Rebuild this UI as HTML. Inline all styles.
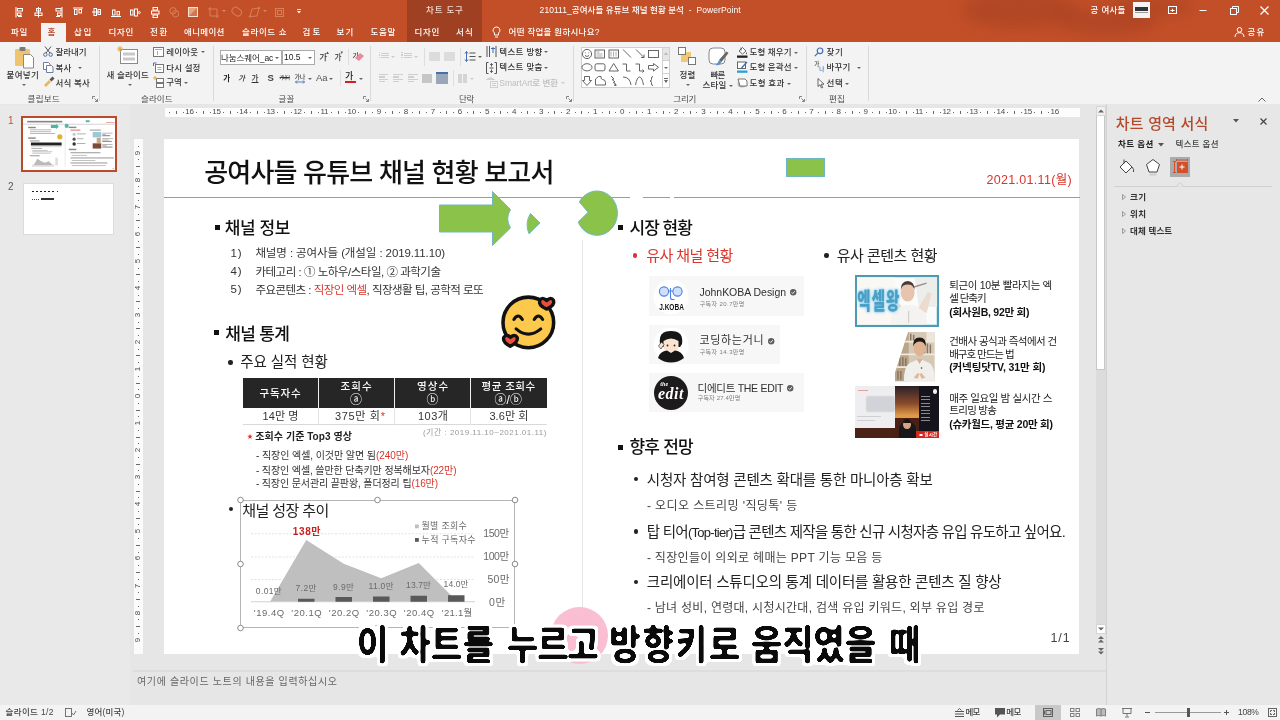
<!DOCTYPE html>
<html lang="ko">
<head>
<meta charset="utf-8">
<title>210111_공여사들 유튜브 채널 현황 분석 - PowerPoint</title>
<style>
*{box-sizing:border-box;margin:0;padding:0}
html,body{width:1280px;height:720px;overflow:hidden;background:#e6e6e6}
body{position:relative;font-family:"Liberation Sans","Noto Sans CJK KR",sans-serif;font-size:8px;color:#333}
#root{position:absolute;left:0;top:0;width:1280px;height:720px;overflow:hidden;will-change:transform}
.a{position:absolute}
.t{position:absolute;white-space:nowrap;line-height:1}
.ui{font-family:"Liberation Sans","Noto Sans CJK KR",sans-serif;color:#333;font-weight:500}
.sl{font-family:"Liberation Sans","Noto Sans CJK KR",sans-serif;color:#222}
.w{color:#fff}
svg{position:absolute;overflow:visible}
.ar{position:absolute;width:0;height:0;border-left:2px solid transparent;border-right:2px solid transparent;border-top:2.5px solid #666}
.sep{position:absolute;top:46px;width:1px;height:55px;background:#d9d9d9}
.ln{position:absolute;width:5px;height:5px;border-right:1px solid #777;border-bottom:1px solid #777}
</style>
</head>
<body>
<div id="root">
<div class="a" style="left:0;top:0;width:1280px;height:42px;background:#c34f28"></div>
<div class="a" style="left:940px;top:0;width:280px;height:42px;overflow:hidden"><div class="a" style="left:22px;top:-8px;width:115px;height:36px;border-radius:50%;background:rgba(110,40,25,.20);filter:blur(7px)"></div><div class="a" style="left:120px;top:8px;width:95px;height:28px;border-radius:50%;background:rgba(110,40,25,.18);filter:blur(7px)"></div><div class="a" style="left:170px;top:-6px;width:85px;height:24px;border-radius:50%;background:rgba(110,40,25,.15);filter:blur(7px)"></div></div>
<div class="a" style="left:407px;top:0;width:74.5px;height:42px;background:#9f4022"></div>
<div class="a" style="left:41px;top:22.5px;width:24.5px;height:20px;background:#f3f3f3"></div>
<span class="t ui" style="left:426.1px;top:6.0px;font-size:8.5px;color:#f3d9cf;font-weight:500;letter-spacing:0.80px;">차트 도구</span>
<span class="t ui" style="left:539.6px;top:6.0px;font-size:8.5px;color:#fff;font-weight:500;letter-spacing:0.06px;">210111_공여사들 유튜브 채널 현황 분석&nbsp; -&nbsp; PowerPoint</span>
<span class="t ui" style="left:1090.6px;top:6.0px;font-size:8.5px;color:#fff;font-weight:500;letter-spacing:0.30px;">공 여사들</span>
<div class="a" style="left:1133px;top:2px;width:17px;height:16px;background:#f4f4f4"></div>
<div class="a" style="left:1135px;top:7px;width:13px;height:4px;background:#333"></div><div class="a" style="left:1135px;top:12px;width:13px;height:1px;background:#999"></div>
<svg style="left:1160px;top:0" width="120" height="22" viewBox="0 0 120 22" fill="none" stroke="#fff" stroke-width="1">
<rect x="8.5" y="6.5" width="8" height="7"/><path d="M10.5 10.5h4M12.5 8.8v3"/>
<path d="M39.5 10.5h7"/>
<rect x="70.5" y="8.5" width="6" height="6"/><path d="M72.5 8.5v-2h6v6h-2"/>
<path d="M100.5 6.5l8 8M108.5 6.5l-8 8" stroke-width="1.2"/></svg>
<span class="t ui" style="left:11.1px;top:28.1px;font-size:8.5px;color:#fff;font-weight:500;letter-spacing:0.71px;">파일</span>
<span class="t ui" style="left:74.1px;top:28.1px;font-size:8.5px;color:#fff;font-weight:500;letter-spacing:1.71px;">삽입</span>
<span class="t ui" style="left:108.6px;top:28.1px;font-size:8.5px;color:#fff;font-weight:500;letter-spacing:0.69px;">디자인</span>
<span class="t ui" style="left:150.1px;top:28.1px;font-size:8.5px;color:#fff;font-weight:500;letter-spacing:1.71px;">전환</span>
<span class="t ui" style="left:184.1px;top:28.1px;font-size:8.5px;color:#fff;font-weight:500;letter-spacing:0.31px;">애니메이션</span>
<span class="t ui" style="left:242.1px;top:28.1px;font-size:8.5px;color:#fff;font-weight:500;letter-spacing:0.58px;">슬라이드 쇼</span>
<span class="t ui" style="left:302.6px;top:28.1px;font-size:8.5px;color:#fff;font-weight:500;letter-spacing:2.21px;">검토</span>
<span class="t ui" style="left:336.6px;top:28.1px;font-size:8.5px;color:#fff;font-weight:500;letter-spacing:1.21px;">보기</span>
<span class="t ui" style="left:370.6px;top:28.1px;font-size:8.5px;color:#fff;font-weight:500;letter-spacing:0.69px;">도움말</span>
<span class="t ui" style="left:414.6px;top:28.1px;font-size:8.5px;color:#fff;font-weight:500;letter-spacing:0.69px;">디자인</span>
<span class="t ui" style="left:456.1px;top:28.1px;font-size:8.5px;color:#fff;font-weight:500;letter-spacing:1.21px;">서식</span>
<span class="t ui" style="left:508.6px;top:28.1px;font-size:8.5px;color:#fff;font-weight:500;letter-spacing:0.27px;">어떤 작업을 원하시나요?</span>
<span class="t ui" style="left:47.6px;top:28.1px;font-size:8.5px;color:#b9472a;font-weight:500;letter-spacing:0.00px;">홈</span>
<span class="t ui" style="left:1247.6px;top:28.1px;font-size:8.5px;color:#fff;font-weight:500;letter-spacing:1.21px;">공유</span>
<svg style="left:1234px;top:26px" width="12" height="12" viewBox="0 0 12 12" fill="none" stroke="#fff" stroke-width="1"><circle cx="5.5" cy="3.8" r="2.3"/><path d="M1 11c0-3 2-4.3 4.5-4.3S10 8 10 11"/></svg>
<svg style="left:491px;top:26px" width="11" height="13" viewBox="0 0 11 13" fill="none" stroke="#fff" stroke-width="1"><path d="M5.5 1a3.3 3.3 0 0 0-2 6v2h4V7a3.3 3.3 0 0 0-2-6zM4 11h3"/></svg>
<svg style="left:14.5px;top:6.8px" width="12" height="11" viewBox="0 0 12 11" fill="none" stroke="#fff" stroke-width="1"><path d="M1 0v10.5"/><rect x="2.5" y="1.5" width="5" height="2.5"/><rect x="2.5" y="6" width="3.5" height="2.5"/><path d="M3 9.5h4"/></svg>
<svg style="left:34px;top:6.8px" width="12" height="11" viewBox="0 0 12 11" fill="none" stroke="#fff" stroke-width="1"><path d="M4.5 0v10.5"/><rect x="2.5" y="1.5" width="4" height="2.5"/><rect x="1" y="6" width="7" height="2.5"/></svg>
<svg style="left:54px;top:6.8px" width="12" height="11" viewBox="0 0 12 11" fill="none" stroke="#fff" stroke-width="1"><path d="M8 0v10.5"/><rect x="2" y="1.5" width="5" height="2.5"/><rect x="3.5" y="6" width="3.5" height="2.5"/><path d="M2 9.5h4"/></svg>
<svg style="left:72.5px;top:6.8px" width="12" height="11" viewBox="0 0 12 11" fill="none" stroke="#fff" stroke-width="1"><path d="M0 1h10"/><rect x="1.5" y="2.5" width="2.5" height="5"/><rect x="6" y="2.5" width="2.5" height="3.5"/></svg>
<svg style="left:92px;top:6.8px" width="12" height="11" viewBox="0 0 12 11" fill="none" stroke="#fff" stroke-width="1"><path d="M0 5h9"/><rect x="2" y="1.5" width="2.5" height="7"/><rect x="6" y="2.5" width="2.5" height="5"/></svg>
<svg style="left:111px;top:6.8px" width="12" height="11" viewBox="0 0 12 11" fill="none" stroke="#fff" stroke-width="1"><path d="M0 9.5h10"/><rect x="1.5" y="3" width="2.5" height="5"/><rect x="6" y="4.5" width="2.5" height="3.5"/></svg>
<svg style="left:130px;top:6.8px" width="12" height="11" viewBox="0 0 12 11" fill="none" stroke="#fff" stroke-width="1"><rect x="0.5" y="3" width="2.5" height="5"/><rect x="4.5" y="2" width="3" height="7"/><circle cx="9.3" cy="5.5" r="1"/></svg>
<svg style="left:150.5px;top:6.8px" width="12" height="11" viewBox="0 0 12 11" fill="none" stroke="#fff" stroke-width="1"><rect x="2" y="0.5" width="4.5" height="2.5"/><rect x="0.5" y="4" width="7.5" height="3"/><rect x="2" y="8" width="4.5" height="2.5"/></svg>
<svg style="left:169px;top:6.8px" width="12" height="11" viewBox="0 0 12 11" fill="none" stroke="#d9805a" stroke-width="1"><circle cx="4" cy="3.8" r="3.2"/><circle cx="6.5" cy="6.8" r="3.2"/></svg>
<div class="a" style="left:188px;top:6.800px;width:10px;height:10px;border:1px solid #fbe3d6;background:#e5a583"></div>
<svg style="left:188px;top:6.800px" width="10" height="10" viewBox="0 0 10 10"><path d="M1 9L9 1v8z" fill="#c34f28" opacity=".55"/></svg>
<svg style="left:207.5px;top:6.8px" width="12" height="11" viewBox="0 0 12 11" fill="none" stroke="#d9805a" stroke-width="1"><path d="M2 0v9h9M0 2h9v9"/></svg>
<svg style="left:231px;top:6.8px" width="12" height="11" viewBox="0 0 12 11" fill="none" stroke="#d9805a" stroke-width="1"><rect x="0.5" y="1" width="10" height="7" rx="3.5" transform="rotate(35 5.5 5)"/></svg>
<svg style="left:249px;top:6.8px" width="12" height="11" viewBox="0 0 12 11" fill="none" stroke="#d9805a" stroke-width="1"><path d="M1 9.5L3 2l7-1-2 8z"/><circle cx="1" cy="9.5" r=".8"/><circle cx="10" cy="1" r=".8"/></svg>
<svg style="left:274px;top:6.8px" width="12" height="11" viewBox="0 0 12 11" fill="none" stroke="#d9805a" stroke-width="1"><rect x="1.5" y="1.5" width="8" height="8"/><rect x="3.5" y="3.5" width="4" height="4"/></svg>
<div class="ar" style="left:221.5px;top:10px;border-top-color:#dc8762"></div><div class="ar" style="left:263px;top:10px;border-top-color:#dc8762"></div>
<svg style="left:296.500px;top:9px" width="4" height="5" viewBox="0 0 5 6"><path d="M0 0.5h5" stroke="#fff"/><path d="M0 2.5h5L2.5 5.5z" fill="#fff"/></svg>
<div class="a" style="left:0;top:42px;width:1280px;height:62.500px;background:#f3f3f3;border-bottom:1px solid #dedede"></div>
<div class="sep" style="left:99px"></div>
<div class="sep" style="left:213px"></div>
<div class="sep" style="left:370px"></div>
<div class="sep" style="left:573px"></div>
<div class="sep" style="left:806px"></div>
<div class="sep" style="left:868px"></div>
<svg style="left:14px;top:46px" width="21" height="23" viewBox="0 0 21 23"><rect x="1" y="3" width="15" height="17" rx="1" fill="#eec46e"/><rect x="5.5" y="1" width="6" height="4" rx="1" fill="#7a7a7a"/><path d="M9.5 8.5h7l3 3V22h-10z" fill="#fff" stroke="#8a8a8a" stroke-width="1"/></svg>
<span class="t ui" style="left:6.6px;top:71.0px;font-size:8.5px;letter-spacing:0.29px;">붙여넣기</span>
<div class="ar" style="left:22px;top:84px;border-top-color:#666"></div>
<svg style="left:43px;top:46px" width="10" height="11" viewBox="0 0 10 11" fill="none" stroke="#4a6ea8" stroke-width="1"><path d="M2 0.5L7 7M8 0.5L3 7" stroke="#555"/><circle cx="2.3" cy="8.6" r="1.7"/><circle cx="7.7" cy="8.6" r="1.7"/></svg>
<span class="t ui" style="left:55.6px;top:48.0px;font-size:8.5px;letter-spacing:-0.14px;">잘라내기</span>
<svg style="left:43px;top:62px" width="11" height="11" viewBox="0 0 11 11" fill="#fff" stroke="#6b7f9c" stroke-width="1"><path d="M0.5 0.5h5l1.5 1.5v5.5h-6.5z"/><path d="M3.5 3.5h5l1.500 1.5v5.5h-6.5z"/></svg>
<span class="t ui" style="left:55.6px;top:63.8px;font-size:8.5px;letter-spacing:0.21px;">복사</span>
<div class="ar" style="left:78px;top:67px;border-top-color:#666"></div>
<svg style="left:43px;top:76px" width="12" height="12" viewBox="0 0 12 12"><path d="M1 9l5-5 2 2-5 5z" fill="#e8b85a"/><path d="M6.5 3.5l3-3 2 2-3 3z" fill="#555"/></svg>
<span class="t ui" style="left:55.6px;top:78.5px;font-size:8.5px;letter-spacing:0.15px;">서식 복사</span>
<span class="t ui" style="left:27.6px;top:94.6px;font-size:8.5px;color:#4a4a4a;font-weight:400;letter-spacing:0.32px;">클립보드</span>
<svg style="left:92px;top:96px" width="6" height="6" viewBox="0 0 6 6" fill="none" stroke="#777" stroke-width="0.9"><path d="M0.5 3V0.5H3M2.5 2.5L5.5 5.5M5.5 3v2.5H3"/></svg>
<svg style="left:117px;top:46px" width="22" height="19" viewBox="0 0 22 19"><rect x="3.500" y="3.500" width="17" height="14" fill="#fff" stroke="#8a8a8a"/><rect x="6" y="6.500" width="12" height="3" fill="#c8c8c8"/><rect x="6" y="11.500" width="12" height="3" fill="#c8c8c8"/><path d="M3 0v6M0 3h6M1 1l4 4M5 1L1 5" stroke="#e8a93a" stroke-width="1"/></svg>
<span class="t ui" style="left:106.6px;top:71.0px;font-size:8.5px;letter-spacing:0.16px;">새 슬라이드</span>
<div class="ar" style="left:128px;top:84px;border-top-color:#666"></div>
<svg style="left:153px;top:47px" width="11" height="10" viewBox="0 0 11 10" fill="#fff" stroke="#777"><rect x="0.500" y="0.500" width="10" height="9"/><path d="M2 2.500h7M4.500 4v4" stroke="#aaa"/></svg>
<span class="t ui" style="left:166.2px;top:47.7px;font-size:8.5px;letter-spacing:0.16px;">레이아웃</span>
<div class="ar" style="left:200.5px;top:51px;border-top-color:#666"></div>
<svg style="left:153px;top:62px" width="11" height="11" viewBox="0 0 11 11" fill="#fff" stroke="#777"><rect x="2.500" y="2.500" width="8" height="8"/><path d="M0.500 4V1h3" stroke="#3f6fb5" fill="none"/><path d="M4.500 5.500h4M4.500 7.500h4" stroke="#aaa"/></svg>
<span class="t ui" style="left:166.2px;top:63.8px;font-size:8.5px;letter-spacing:0.15px;">다시 설정</span>
<svg style="left:153px;top:76px" width="11" height="12" viewBox="0 0 11 12" fill="#fff" stroke="#777"><rect x="3.500" y="2.500" width="7" height="4"/><rect x="3.500" y="7.500" width="7" height="4"/><path d="M2 0v4M0 2h4" stroke="#e8a93a"/></svg>
<span class="t ui" style="left:166.2px;top:78.2px;font-size:8.5px;letter-spacing:0.01px;">구역</span>
<div class="ar" style="left:184px;top:81.5px;border-top-color:#666"></div>
<span class="t ui" style="left:141.0px;top:94.6px;font-size:8.5px;color:#4a4a4a;font-weight:400;letter-spacing:0.06px;">슬라이드</span>
<div class="a" style="left:219.500px;top:50px;width:62.500px;height:15px;background:#fff;border:1px solid #ababab"></div>
<div class="a" style="left:282px;top:50px;width:33px;height:15px;background:#fff;border:1px solid #ababab"></div>
<span class="t ui" style="left:221.1px;top:53.5px;font-size:8.5px;color:#222;font-weight:400;letter-spacing:-0.09px;">나눔스퀘어_ac</span>
<div class="ar" style="left:275px;top:56.5px;border-top-color:#666"></div>
<span class="t ui" style="left:284.1px;top:53.2px;font-size:8.5px;color:#222;font-weight:400;letter-spacing:-0.07px;">10.5</span>
<div class="ar" style="left:308px;top:56.5px;border-top-color:#666"></div>
<span class="t ui" style="left:319.3px;top:53.0px;font-size:8.5px;color:#333;letter-spacing:0.00px;">가</span>
<span class="t ui" style="left:334.4px;top:54.0px;font-size:7.5px;color:#333;letter-spacing:0.00px;">가</span>
<svg style="left:326px;top:51px" width="20" height="4" viewBox="0 0 20 4" fill="#555"><path d="M0 3l1.500-2.500L3 3z"/><path d="M14.500 0.500l1.300 2.500L17 0.500z"/></svg>
<div class="a" style="left:347.500px;top:49px;width:1px;height:16px;background:#ddd"></div>
<span class="t ui" style="left:352.6px;top:51.7px;font-size:7px;color:#444;letter-spacing:0.00px;">가</span>
<svg style="left:355px;top:53px" width="9" height="8" viewBox="0 0 9 8"><path d="M0 5l5-5 4 3-5 5z" fill="#e88aa0"/></svg>
<span class="t ui" style="left:223.2px;top:74.5px;font-size:7.5px;color:#222;font-weight:700;letter-spacing:0.00px;">가</span>
<span class="t ui" style="left:238.0px;top:74.5px;font-size:7.5px;color:#333;letter-spacing:0.00px;font-style:italic;">가</span>
<span class="t ui" style="left:251.6px;top:74.5px;font-size:7.5px;color:#333;letter-spacing:0.00px;text-decoration:underline;">가</span>
<span class="t ui" style="left:267.5px;top:73.2px;font-size:9.5px;color:#444;font-weight:700;letter-spacing:0.00px;">S</span>
<span class="t ui" style="left:279.6px;top:75.9px;font-size:4.5px;color:#333;letter-spacing:-0.89px;text-decoration:line-through;">가나다</span>
<span class="t ui" style="left:294.4px;top:73.7px;font-size:6px;color:#444;letter-spacing:-0.15px;">가나</span>
<svg style="left:295px;top:80px" width="10" height="4" viewBox="0 0 10 4" fill="none" stroke="#3f6fb5" stroke-width="0.9"><path d="M0.500 2h9M2 0.500L0.500 2 2 3.500M8 0.500L9.500 2 8 3.500"/></svg>
<div class="ar" style="left:308px;top:77.5px;border-top-color:#666"></div>
<span class="t ui" style="left:316.0px;top:73.2px;font-size:9.5px;color:#555;font-weight:400;letter-spacing:-0.18px;">Aa</span>
<div class="ar" style="left:329px;top:77.5px;border-top-color:#666"></div>
<div class="a" style="left:339.500px;top:70px;width:1px;height:16px;background:#ddd"></div>
<span class="t ui" style="left:345.1px;top:71.8px;font-size:9px;color:#222;letter-spacing:0.00px;">가</span>
<div class="a" style="left:345px;top:81px;width:10.500px;height:2px;background:#d6201f"></div>
<div class="ar" style="left:359px;top:77.5px;border-top-color:#666"></div>
<span class="t ui" style="left:278.6px;top:95.0px;font-size:8.5px;color:#4a4a4a;font-weight:400;letter-spacing:0.21px;">글꼴</span>
<svg style="left:363px;top:96px" width="6" height="6" viewBox="0 0 6 6" fill="none" stroke="#777" stroke-width="0.9"><path d="M0.5 3V0.5H3M2.5 2.5L5.5 5.5M5.5 3v2.5H3"/></svg>
<div class="a" style="left:381px;top:52.5px;width:7.5px;height:1.2px;background:#cfcfcf"></div><div class="a" style="left:381px;top:54.9px;width:7.5px;height:1.2px;background:#cfcfcf"></div><div class="a" style="left:381px;top:57.3px;width:7.5px;height:1.2px;background:#cfcfcf"></div>
<div class="a" style="left:378.500px;top:52px;width:1.500px;height:7px;background:repeating-linear-gradient(#cfcfcf 0 1.500px,transparent 1.500px 2.400px)"></div>
<div class="ar" style="left:391px;top:56px;border-top-color:#ccc"></div>
<div class="a" style="left:404px;top:52.5px;width:7.5px;height:1.2px;background:#cfcfcf"></div><div class="a" style="left:404px;top:54.9px;width:7.5px;height:1.2px;background:#cfcfcf"></div><div class="a" style="left:404px;top:57.3px;width:7.5px;height:1.2px;background:#cfcfcf"></div>
<div class="a" style="left:401px;top:52px;width:1.500px;height:7px;background:repeating-linear-gradient(#cfcfcf 0 1.500px,transparent 1.500px 2.400px)"></div>
<div class="ar" style="left:414px;top:56px;border-top-color:#ccc"></div>
<div class="a" style="left:424px;top:48px;width:1px;height:18px;background:#ddd"></div><div class="a" style="left:460px;top:48px;width:1px;height:18px;background:#ddd"></div>
<div class="a" style="left:429px;top:52px;width:11px;height:9px;background:#dcdcdc"></div><div class="a" style="left:444px;top:52px;width:11px;height:9px;background:#dcdcdc"></div>
<svg style="left:465px;top:51px" width="11" height="11" viewBox="0 0 11 11" fill="none" stroke="#555" stroke-width="1"><path d="M4.500 2h6M4.500 5.500h6M4.500 9h6"/><path d="M1.500 0.500v10M0 2.500l1.500-2 1.500 2M0 8.500l1.500 2 1.500-2" stroke="#3f6fb5"/></svg>
<div class="ar" style="left:477.5px;top:56px;border-top-color:#666"></div>
<div class="a" style="left:378.6px;top:74.0px;width:9.5px;height:1.2px;background:#cfcfcf"></div><div class="a" style="left:378.6px;top:76.4px;width:6px;height:1.2px;background:#cfcfcf"></div><div class="a" style="left:378.6px;top:78.8px;width:9.5px;height:1.2px;background:#cfcfcf"></div><div class="a" style="left:378.6px;top:81.2px;width:6px;height:1.2px;background:#cfcfcf"></div>
<div class="a" style="left:393.4px;top:74.0px;width:9.5px;height:1.2px;background:#cfcfcf"></div><div class="a" style="left:393.4px;top:76.4px;width:6px;height:1.2px;background:#cfcfcf"></div><div class="a" style="left:393.4px;top:78.8px;width:9.5px;height:1.2px;background:#cfcfcf"></div><div class="a" style="left:393.4px;top:81.2px;width:6px;height:1.2px;background:#cfcfcf"></div>
<div class="a" style="left:408.3px;top:74.0px;width:9.5px;height:1.2px;background:#cfcfcf"></div><div class="a" style="left:408.3px;top:76.4px;width:6px;height:1.2px;background:#cfcfcf"></div><div class="a" style="left:408.3px;top:78.8px;width:9.5px;height:1.2px;background:#cfcfcf"></div><div class="a" style="left:408.3px;top:81.2px;width:6px;height:1.2px;background:#cfcfcf"></div>
<div class="a" style="left:422.300px;top:73.500px;width:9.700px;height:9.500px;background:#c6c6c6"></div>
<div class="a" style="left:436.400px;top:73px;width:11.600px;height:10.500px;background:#9aa7b8"></div><div class="a" style="left:436.400px;top:72px;width:11.600px;height:1.500px;background:#4a6ea8"></div>
<div class="a" style="left:452.500px;top:70px;width:1px;height:16px;background:#ddd"></div>
<div class="a" style="left:458.300px;top:73.500px;width:3.800px;height:9.500px;background:#d4d4d4"></div><div class="a" style="left:463.200px;top:73.500px;width:3.800px;height:9.500px;background:#d4d4d4"></div>
<div class="ar" style="left:470px;top:77.5px;border-top-color:#ccc"></div>
<span class="t ui" style="left:459.1px;top:95.0px;font-size:8.5px;color:#4a4a4a;font-weight:400;letter-spacing:-0.29px;">단락</span>
<svg style="left:566px;top:96px" width="6" height="6" viewBox="0 0 6 6" fill="none" stroke="#777" stroke-width="0.9"><path d="M0.5 3V0.5H3M2.5 2.5L5.5 5.5M5.5 3v2.5H3"/></svg>
<svg style="left:486px;top:46px" width="11" height="11" viewBox="0 0 11 11" fill="none" stroke="#555" stroke-width="1"><path d="M1 0v11M3.500 0v11M10 0v11"/><path d="M5 2.500h4M7 1v6" stroke="#3f6fb5"/></svg>
<span class="t ui" style="left:499.3px;top:47.7px;font-size:8.5px;letter-spacing:0.32px;">텍스트 방향</span>
<div class="ar" style="left:544.25px;top:51px;border-top-color:#666"></div>
<svg style="left:486px;top:61.500px" width="11" height="12" viewBox="0 0 11 12" fill="none" stroke="#555" stroke-width="1"><path d="M2.500 0.500h-2v11h2M8.500 0.500h2v11h-2"/><path d="M3.500 6h4M5.500 1.500v3M5.500 7.500v3M4.300 3l1.200-1.500L6.700 3M4.300 9l1.200 1.500L6.700 9"/></svg>
<span class="t ui" style="left:499.3px;top:63.3px;font-size:8.5px;letter-spacing:0.32px;">텍스트 맞춤</span>
<div class="ar" style="left:544.25px;top:66.5px;border-top-color:#666"></div>
<svg style="left:486px;top:77px" width="12" height="11" viewBox="0 0 12 11" fill="none" stroke="#cfcfcf" stroke-width="1"><path d="M0.500 2.500l4-2 4 2z" fill="#d8d8d8"/><rect x="4.500" y="4.500" width="7" height="6"/><path d="M6 6.500h4M6 8.500h4"/></svg>
<span class="t ui" style="left:499.3px;top:78.5px;font-size:8.5px;color:#bdbdbd;letter-spacing:-0.06px;">SmartArt로 변환</span>
<div class="ar" style="left:560.5px;top:82px;border-top-color:#ccc"></div>
<div class="a" style="left:580.5px;top:47px;width:89.5px;height:40.5px;background:#fff;border:1px solid #d0d0d0"></div>
<div class="a" style="left:662px;top:47px;width:8px;height:14px;background:#e6e6e6;border:1px solid #d0d0d0"></div><div class="a" style="left:662px;top:60px;width:8px;height:14px;background:#fff;border:1px solid #d0d0d0"></div><div class="a" style="left:662px;top:73px;width:8px;height:14.5px;background:#fff;border:1px solid #d0d0d0"></div>
<svg style="left:664px;top:52px" width="4" height="3" viewBox="0 0 4 3"><path d="M0 3l2-3 2 3z" fill="#bbb"/></svg>
<div class="ar" style="left:664px;top:66.5px;border-top-color:#666"></div>
<svg style="left:664px;top:78px" width="4" height="5" viewBox="0 0 4 5"><path d="M0 0.5h4" stroke="#666"/><path d="M0 2h4L2 5z" fill="#666"/></svg>
<svg style="left:581px;top:47px" width="81" height="40" viewBox="0 0 81 40" fill="none" stroke="#555" stroke-width="0.9">
<circle cx="6" cy="7" r="4.600"/><path d="M4 8.500q2 2 4 0M4.300 5.500v.8M7.700 5.500v.8"/>
<rect x="14" y="3" width="9.500" height="8"/><path d="M15.500 5h3M15.500 7h6M15.500 9h6" stroke="#888" stroke-width="0.7"/>
<rect x="28" y="3" width="9.500" height="8"/><path d="M30 4.500v5M32.500 4.500v5M35 4.500v5" stroke="#888" stroke-width="0.7"/>
<path d="M42 2.500l8 8"/><path d="M55 2.500l8 8M63 10.500v-3M63 10.500h-3"/>
<rect x="67.500" y="3.500" width="10" height="7"/>
<ellipse cx="6" cy="20.300" rx="5" ry="3.600"/><rect x="14" y="16.800" width="10" height="7" rx="1.800"/><path d="M28 24l4.700-7.500 4.700 7.500z"/>
<path d="M41.500 17h4v7h4"/><path d="M54.500 17h4v7h4.500M61.500 22.500l1.500 1.500-1.500 1.500"/>
<path d="M67.500 18.500h5v-2l5 3.800-5 3.800v-2h-5z"/>
<path d="M3.500 29.500h5v4h2l-4.500 5-4.500-5h2z"/><path d="M14.500 38v-6l3-2.500h2.500q-.5 2.500 1.500 3 3 0 3 3v2.500z"/>
<path d="M30 29l3 3-2 .5 3 2.500-1.500.5 2.500 3M35 38.500l-.5-2M35 38.500l-2-.3"/>
<path d="M42 30q7 0 8 8"/><path d="M54.500 38q1.500-8 4-8t4 8"/><path d="M72 29.500q-1.500 0-1.500 1.500v1.500q0 1.500-1.500 1.500 1.500 0 1.500 1.500v1.500q0 1.500 1.500 1.500"/>
</svg>
<svg style="left:678px;top:47px" width="19" height="20" viewBox="0 0 19 20"><rect x="3" y="5" width="10" height="10" fill="#f0c878"/><rect x="0.500" y="0.500" width="7" height="7" fill="#fff" stroke="#777"/><rect x="10.500" y="10.500" width="7" height="7" fill="#fff" stroke="#777"/></svg>
<span class="t ui" style="left:679.6px;top:71.0px;font-size:8.5px;letter-spacing:0.21px;">정렬</span>
<div class="ar" style="left:686px;top:84px;border-top-color:#666"></div>
<svg style="left:708px;top:47px" width="22" height="22" viewBox="0 0 22 22"><rect x="1" y="1" width="16" height="16" rx="4" fill="#fff" stroke="#888"/><path d="M18.500 4.500l2 1.500-7 9-2.500-2z" fill="#666"/><path d="M11 13l2.500 2q-2 4-6 3 2.500-1.500 3.500-5z" fill="#5b8fd0"/></svg>
<span class="t ui" style="left:710.6px;top:70.5px;font-size:8.5px;letter-spacing:-0.79px;">빠른</span>
<span class="t ui" style="left:702.6px;top:81.0px;font-size:8.5px;letter-spacing:0.19px;">스타일</span>
<div class="ar" style="left:729px;top:84.5px;border-top-color:#666"></div>
<svg style="left:737px;top:46px" width="11" height="12" viewBox="0 0 11 12"><path d="M2 5l3.500-3.500L9 5 5.500 8z" fill="#fff" stroke="#555" stroke-width="0.9"/><path d="M4 1.500v3" stroke="#555"/><path d="M9.500 6q1.300 1.800 0 2.500-1.300-.7 0-2.500z" fill="#555"/><rect x="0" y="9.500" width="10.500" height="2.300" fill="#222"/></svg>
<span class="t ui" style="left:749.6px;top:48.0px;font-size:8.5px;letter-spacing:0.08px;">도형 채우기</span>
<div class="ar" style="left:794px;top:51.5px;border-top-color:#666"></div>
<svg style="left:737px;top:61px" width="11" height="12" viewBox="0 0 11 12"><rect x="0.500" y="1" width="8" height="6.500" fill="#fff" stroke="#555" stroke-width="0.9"/><path d="M4 6.500l5.500-6 1 1-5.500 6z" fill="#3f6fb5"/><rect x="0" y="9.500" width="10.500" height="2.300" fill="#2a9fd8"/></svg>
<span class="t ui" style="left:749.6px;top:63.0px;font-size:8.5px;letter-spacing:0.08px;">도형 윤곽선</span>
<div class="ar" style="left:794px;top:66.5px;border-top-color:#666"></div>
<svg style="left:737px;top:78px" width="11" height="10" viewBox="0 0 11 10"><ellipse cx="5" cy="6" rx="4.500" ry="3.500" fill="#bbb"/><path d="M1 1h7l2 2v5H3z" fill="#fff" stroke="#666" stroke-width="0.9"/></svg>
<span class="t ui" style="left:749.6px;top:79.0px;font-size:8.5px;letter-spacing:0.24px;">도형 효과</span>
<div class="ar" style="left:786.75px;top:82.5px;border-top-color:#666"></div>
<span class="t ui" style="left:673.3px;top:94.8px;font-size:8.5px;color:#4a4a4a;font-weight:400;letter-spacing:-0.18px;">그리기</span>
<svg style="left:799px;top:96px" width="6" height="6" viewBox="0 0 6 6" fill="none" stroke="#777" stroke-width="0.9"><path d="M0.5 3V0.5H3M2.5 2.5L5.5 5.5M5.5 3v2.5H3"/></svg>
<svg style="left:814px;top:47px" width="10" height="10" viewBox="0 0 10 10" fill="none" stroke="#3f6fb5" stroke-width="1.200"><circle cx="6" cy="3.800" r="2.800"/><path d="M4 6L0.800 9.200"/></svg>
<span class="t ui" style="left:826.6px;top:48.0px;font-size:8.5px;letter-spacing:0.71px;">찾기</span>
<span class="t ui" style="left:814.2px;top:61.9px;font-size:5.5px;color:#444;letter-spacing:0.00px;">가</span>
<span class="t ui" style="left:819.2px;top:66.9px;font-size:5.5px;color:#3f6fb5;letter-spacing:0.00px;">나</span>
<span class="t ui" style="left:826.6px;top:63.0px;font-size:8.5px;letter-spacing:0.19px;">바꾸기</span>
<div class="ar" style="left:856.75px;top:66.5px;border-top-color:#666"></div>
<svg style="left:817px;top:78px" width="8" height="11" viewBox="0 0 8 11"><path d="M1 0.500v8l2-1.800 1.500 3.300 1.200-.5L4.200 6.200H7z" fill="#fff" stroke="#555" stroke-width="0.9"/></svg>
<span class="t ui" style="left:826.6px;top:79.0px;font-size:8.5px;letter-spacing:0.71px;">선택</span>
<div class="ar" style="left:845px;top:82.5px;border-top-color:#666"></div>
<span class="t ui" style="left:829.1px;top:94.8px;font-size:8.5px;color:#4a4a4a;font-weight:400;letter-spacing:0.21px;">편집</span>
<svg style="left:1258px;top:97px" width="8" height="5" viewBox="0 0 8 5" fill="none" stroke="#666"><path d="M0.500 4.500L4 1l3.500 3.500"/></svg>
<div class="a" style="left:0;top:104px;width:1280px;height:600px;background:#e6e6e6"></div>
<div class="a" style="left:0;top:104.500px;width:129.500px;height:601px;background:#e9e9e9"></div>
<div class="a" style="left:165px;top:108px;width:914.500px;height:9px;background:#fdfdfd"></div>
<span class="t ui" style="left:185.3px;top:108.300px;font-size:8px;color:#4a4a4a;letter-spacing:-0.300px">16</span><div class="a" style="left:196.1px;top:111.9px;width:1px;height:1px;background:#6a6a6a"></div><div class="a" style="left:202.9px;top:110.7px;width:1px;height:3.4px;background:#6a6a6a"></div><div class="a" style="left:209.6px;top:111.9px;width:1px;height:1px;background:#6a6a6a"></div><span class="t ui" style="left:212.3px;top:108.300px;font-size:8px;color:#4a4a4a;letter-spacing:-0.300px">15</span><div class="a" style="left:223.2px;top:111.9px;width:1px;height:1px;background:#6a6a6a"></div><div class="a" style="left:229.9px;top:110.7px;width:1px;height:3.4px;background:#6a6a6a"></div><div class="a" style="left:236.7px;top:111.9px;width:1px;height:1px;background:#6a6a6a"></div><span class="t ui" style="left:239.3px;top:108.300px;font-size:8px;color:#4a4a4a;letter-spacing:-0.300px">14</span><div class="a" style="left:250.2px;top:111.9px;width:1px;height:1px;background:#6a6a6a"></div><div class="a" style="left:257.0px;top:110.7px;width:1px;height:3.4px;background:#6a6a6a"></div><div class="a" style="left:263.7px;top:111.9px;width:1px;height:1px;background:#6a6a6a"></div><span class="t ui" style="left:266.4px;top:108.300px;font-size:8px;color:#4a4a4a;letter-spacing:-0.300px">13</span><div class="a" style="left:277.2px;top:111.9px;width:1px;height:1px;background:#6a6a6a"></div><div class="a" style="left:284.0px;top:110.7px;width:1px;height:3.4px;background:#6a6a6a"></div><div class="a" style="left:290.8px;top:111.9px;width:1px;height:1px;background:#6a6a6a"></div><span class="t ui" style="left:293.4px;top:108.300px;font-size:8px;color:#4a4a4a;letter-spacing:-0.300px">12</span><div class="a" style="left:304.3px;top:111.9px;width:1px;height:1px;background:#6a6a6a"></div><div class="a" style="left:311.0px;top:110.7px;width:1px;height:3.4px;background:#6a6a6a"></div><div class="a" style="left:317.8px;top:111.9px;width:1px;height:1px;background:#6a6a6a"></div><span class="t ui" style="left:320.5px;top:108.300px;font-size:8px;color:#4a4a4a;letter-spacing:-0.300px">11</span><div class="a" style="left:331.3px;top:111.9px;width:1px;height:1px;background:#6a6a6a"></div><div class="a" style="left:338.1px;top:110.7px;width:1px;height:3.4px;background:#6a6a6a"></div><div class="a" style="left:344.8px;top:111.9px;width:1px;height:1px;background:#6a6a6a"></div><span class="t ui" style="left:347.5px;top:108.300px;font-size:8px;color:#4a4a4a;letter-spacing:-0.300px">10</span><div class="a" style="left:358.4px;top:111.9px;width:1px;height:1px;background:#6a6a6a"></div><div class="a" style="left:365.1px;top:110.7px;width:1px;height:3.4px;background:#6a6a6a"></div><div class="a" style="left:371.9px;top:111.9px;width:1px;height:1px;background:#6a6a6a"></div><span class="t ui" style="left:376.7px;top:108.300px;font-size:8px;color:#4a4a4a;letter-spacing:-0.300px">9</span><div class="a" style="left:385.4px;top:111.9px;width:1px;height:1px;background:#6a6a6a"></div><div class="a" style="left:392.2px;top:110.7px;width:1px;height:3.4px;background:#6a6a6a"></div><div class="a" style="left:398.9px;top:111.9px;width:1px;height:1px;background:#6a6a6a"></div><span class="t ui" style="left:403.7px;top:108.300px;font-size:8px;color:#4a4a4a;letter-spacing:-0.300px">8</span><div class="a" style="left:412.4px;top:111.9px;width:1px;height:1px;background:#6a6a6a"></div><div class="a" style="left:419.2px;top:110.7px;width:1px;height:3.4px;background:#6a6a6a"></div><div class="a" style="left:426.0px;top:111.9px;width:1px;height:1px;background:#6a6a6a"></div><span class="t ui" style="left:430.8px;top:108.300px;font-size:8px;color:#4a4a4a;letter-spacing:-0.300px">7</span><div class="a" style="left:439.5px;top:111.9px;width:1px;height:1px;background:#6a6a6a"></div><div class="a" style="left:446.2px;top:110.7px;width:1px;height:3.4px;background:#6a6a6a"></div><div class="a" style="left:453.0px;top:111.9px;width:1px;height:1px;background:#6a6a6a"></div><span class="t ui" style="left:457.8px;top:108.300px;font-size:8px;color:#4a4a4a;letter-spacing:-0.300px">6</span><div class="a" style="left:466.5px;top:111.9px;width:1px;height:1px;background:#6a6a6a"></div><div class="a" style="left:473.3px;top:110.7px;width:1px;height:3.4px;background:#6a6a6a"></div><div class="a" style="left:480.0px;top:111.9px;width:1px;height:1px;background:#6a6a6a"></div><span class="t ui" style="left:484.9px;top:108.300px;font-size:8px;color:#4a4a4a;letter-spacing:-0.300px">5</span><div class="a" style="left:493.6px;top:111.9px;width:1px;height:1px;background:#6a6a6a"></div><div class="a" style="left:500.3px;top:110.7px;width:1px;height:3.4px;background:#6a6a6a"></div><div class="a" style="left:507.1px;top:111.9px;width:1px;height:1px;background:#6a6a6a"></div><span class="t ui" style="left:511.9px;top:108.300px;font-size:8px;color:#4a4a4a;letter-spacing:-0.300px">4</span><div class="a" style="left:520.6px;top:111.9px;width:1px;height:1px;background:#6a6a6a"></div><div class="a" style="left:527.4px;top:110.7px;width:1px;height:3.4px;background:#6a6a6a"></div><div class="a" style="left:534.1px;top:111.9px;width:1px;height:1px;background:#6a6a6a"></div><span class="t ui" style="left:538.9px;top:108.300px;font-size:8px;color:#4a4a4a;letter-spacing:-0.300px">3</span><div class="a" style="left:547.6px;top:111.9px;width:1px;height:1px;background:#6a6a6a"></div><div class="a" style="left:554.4px;top:110.7px;width:1px;height:3.4px;background:#6a6a6a"></div><div class="a" style="left:561.2px;top:111.9px;width:1px;height:1px;background:#6a6a6a"></div><span class="t ui" style="left:566.0px;top:108.300px;font-size:8px;color:#4a4a4a;letter-spacing:-0.300px">2</span><div class="a" style="left:574.7px;top:111.9px;width:1px;height:1px;background:#6a6a6a"></div><div class="a" style="left:581.4px;top:110.7px;width:1px;height:3.4px;background:#6a6a6a"></div><div class="a" style="left:588.2px;top:111.9px;width:1px;height:1px;background:#6a6a6a"></div><span class="t ui" style="left:593.0px;top:108.300px;font-size:8px;color:#4a4a4a;letter-spacing:-0.300px">1</span><div class="a" style="left:601.7px;top:111.9px;width:1px;height:1px;background:#6a6a6a"></div><div class="a" style="left:608.5px;top:110.7px;width:1px;height:3.4px;background:#6a6a6a"></div><div class="a" style="left:615.2px;top:111.9px;width:1px;height:1px;background:#6a6a6a"></div><span class="t ui" style="left:620.1px;top:108.300px;font-size:8px;color:#4a4a4a;letter-spacing:-0.300px">0</span><div class="a" style="left:628.8px;top:111.9px;width:1px;height:1px;background:#6a6a6a"></div><div class="a" style="left:635.5px;top:110.7px;width:1px;height:3.4px;background:#6a6a6a"></div><div class="a" style="left:642.3px;top:111.9px;width:1px;height:1px;background:#6a6a6a"></div><span class="t ui" style="left:647.1px;top:108.300px;font-size:8px;color:#4a4a4a;letter-spacing:-0.300px">1</span><div class="a" style="left:655.8px;top:111.9px;width:1px;height:1px;background:#6a6a6a"></div><div class="a" style="left:662.6px;top:110.7px;width:1px;height:3.4px;background:#6a6a6a"></div><div class="a" style="left:669.3px;top:111.9px;width:1px;height:1px;background:#6a6a6a"></div><span class="t ui" style="left:674.1px;top:108.300px;font-size:8px;color:#4a4a4a;letter-spacing:-0.300px">2</span><div class="a" style="left:682.8px;top:111.9px;width:1px;height:1px;background:#6a6a6a"></div><div class="a" style="left:689.6px;top:110.7px;width:1px;height:3.4px;background:#6a6a6a"></div><div class="a" style="left:696.4px;top:111.9px;width:1px;height:1px;background:#6a6a6a"></div><span class="t ui" style="left:701.2px;top:108.300px;font-size:8px;color:#4a4a4a;letter-spacing:-0.300px">3</span><div class="a" style="left:709.9px;top:111.9px;width:1px;height:1px;background:#6a6a6a"></div><div class="a" style="left:716.6px;top:110.7px;width:1px;height:3.4px;background:#6a6a6a"></div><div class="a" style="left:723.4px;top:111.9px;width:1px;height:1px;background:#6a6a6a"></div><span class="t ui" style="left:728.2px;top:108.300px;font-size:8px;color:#4a4a4a;letter-spacing:-0.300px">4</span><div class="a" style="left:736.9px;top:111.9px;width:1px;height:1px;background:#6a6a6a"></div><div class="a" style="left:743.7px;top:110.7px;width:1px;height:3.4px;background:#6a6a6a"></div><div class="a" style="left:750.4px;top:111.9px;width:1px;height:1px;background:#6a6a6a"></div><span class="t ui" style="left:755.3px;top:108.300px;font-size:8px;color:#4a4a4a;letter-spacing:-0.300px">5</span><div class="a" style="left:764.0px;top:111.9px;width:1px;height:1px;background:#6a6a6a"></div><div class="a" style="left:770.7px;top:110.7px;width:1px;height:3.4px;background:#6a6a6a"></div><div class="a" style="left:777.5px;top:111.9px;width:1px;height:1px;background:#6a6a6a"></div><span class="t ui" style="left:782.3px;top:108.300px;font-size:8px;color:#4a4a4a;letter-spacing:-0.300px">6</span><div class="a" style="left:791.0px;top:111.9px;width:1px;height:1px;background:#6a6a6a"></div><div class="a" style="left:797.8px;top:110.7px;width:1px;height:3.4px;background:#6a6a6a"></div><div class="a" style="left:804.5px;top:111.9px;width:1px;height:1px;background:#6a6a6a"></div><span class="t ui" style="left:809.3px;top:108.300px;font-size:8px;color:#4a4a4a;letter-spacing:-0.300px">7</span><div class="a" style="left:818.0px;top:111.9px;width:1px;height:1px;background:#6a6a6a"></div><div class="a" style="left:824.8px;top:110.7px;width:1px;height:3.4px;background:#6a6a6a"></div><div class="a" style="left:831.6px;top:111.9px;width:1px;height:1px;background:#6a6a6a"></div><span class="t ui" style="left:836.4px;top:108.300px;font-size:8px;color:#4a4a4a;letter-spacing:-0.300px">8</span><div class="a" style="left:845.1px;top:111.9px;width:1px;height:1px;background:#6a6a6a"></div><div class="a" style="left:851.8px;top:110.7px;width:1px;height:3.4px;background:#6a6a6a"></div><div class="a" style="left:858.6px;top:111.9px;width:1px;height:1px;background:#6a6a6a"></div><span class="t ui" style="left:863.4px;top:108.300px;font-size:8px;color:#4a4a4a;letter-spacing:-0.300px">9</span><div class="a" style="left:872.1px;top:111.9px;width:1px;height:1px;background:#6a6a6a"></div><div class="a" style="left:878.9px;top:110.7px;width:1px;height:3.4px;background:#6a6a6a"></div><div class="a" style="left:885.6px;top:111.9px;width:1px;height:1px;background:#6a6a6a"></div><span class="t ui" style="left:888.3px;top:108.300px;font-size:8px;color:#4a4a4a;letter-spacing:-0.300px">10</span><div class="a" style="left:899.2px;top:111.9px;width:1px;height:1px;background:#6a6a6a"></div><div class="a" style="left:905.9px;top:110.7px;width:1px;height:3.4px;background:#6a6a6a"></div><div class="a" style="left:912.7px;top:111.9px;width:1px;height:1px;background:#6a6a6a"></div><span class="t ui" style="left:915.3px;top:108.300px;font-size:8px;color:#4a4a4a;letter-spacing:-0.300px">11</span><div class="a" style="left:926.2px;top:111.9px;width:1px;height:1px;background:#6a6a6a"></div><div class="a" style="left:933.0px;top:110.7px;width:1px;height:3.4px;background:#6a6a6a"></div><div class="a" style="left:939.7px;top:111.9px;width:1px;height:1px;background:#6a6a6a"></div><span class="t ui" style="left:942.4px;top:108.300px;font-size:8px;color:#4a4a4a;letter-spacing:-0.300px">12</span><div class="a" style="left:953.2px;top:111.9px;width:1px;height:1px;background:#6a6a6a"></div><div class="a" style="left:960.0px;top:110.7px;width:1px;height:3.4px;background:#6a6a6a"></div><div class="a" style="left:966.8px;top:111.9px;width:1px;height:1px;background:#6a6a6a"></div><span class="t ui" style="left:969.4px;top:108.300px;font-size:8px;color:#4a4a4a;letter-spacing:-0.300px">13</span><div class="a" style="left:980.3px;top:111.9px;width:1px;height:1px;background:#6a6a6a"></div><div class="a" style="left:987.0px;top:110.7px;width:1px;height:3.4px;background:#6a6a6a"></div><div class="a" style="left:993.8px;top:111.9px;width:1px;height:1px;background:#6a6a6a"></div><span class="t ui" style="left:996.5px;top:108.300px;font-size:8px;color:#4a4a4a;letter-spacing:-0.300px">14</span><div class="a" style="left:1007.3px;top:111.9px;width:1px;height:1px;background:#6a6a6a"></div><div class="a" style="left:1014.1px;top:110.7px;width:1px;height:3.4px;background:#6a6a6a"></div><div class="a" style="left:1020.8px;top:111.9px;width:1px;height:1px;background:#6a6a6a"></div><span class="t ui" style="left:1023.5px;top:108.300px;font-size:8px;color:#4a4a4a;letter-spacing:-0.300px">15</span><div class="a" style="left:1034.4px;top:111.9px;width:1px;height:1px;background:#6a6a6a"></div><div class="a" style="left:1041.1px;top:110.7px;width:1px;height:3.4px;background:#6a6a6a"></div><div class="a" style="left:1047.9px;top:111.9px;width:1px;height:1px;background:#6a6a6a"></div><span class="t ui" style="left:1050.5px;top:108.300px;font-size:8px;color:#4a4a4a;letter-spacing:-0.300px">16</span><div class="a" style="left:182.6px;top:111.9px;width:1px;height:1px;background:#6a6a6a"></div><div class="a" style="left:175.8px;top:110.7px;width:1px;height:3.4px;background:#6a6a6a"></div><div class="a" style="left:169.1px;top:111.9px;width:1px;height:1px;background:#6a6a6a"></div>
<div class="a" style="left:133.500px;top:139px;width:9px;height:514.500px;background:#fbfbfb"></div>
<span class="t ui" style="left:134px;top:148.8px;width:8px;height:8px;font-size:8px;color:#4a4a4a;transform:rotate(-90deg);text-align:center;line-height:8px">9</span><div class="a" style="left:137.5px;top:159.4px;width:1px;height:1px;background:#6a6a6a"></div><div class="a" style="left:136.3px;top:166.2px;width:3.4px;height:1px;background:#6a6a6a"></div><div class="a" style="left:137.5px;top:172.9px;width:1px;height:1px;background:#6a6a6a"></div><span class="t ui" style="left:134px;top:175.9px;width:8px;height:8px;font-size:8px;color:#4a4a4a;transform:rotate(-90deg);text-align:center;line-height:8px">8</span><div class="a" style="left:137.5px;top:186.4px;width:1px;height:1px;background:#6a6a6a"></div><div class="a" style="left:136.3px;top:193.2px;width:3.4px;height:1px;background:#6a6a6a"></div><div class="a" style="left:137.5px;top:200.0px;width:1px;height:1px;background:#6a6a6a"></div><span class="t ui" style="left:134px;top:202.9px;width:8px;height:8px;font-size:8px;color:#4a4a4a;transform:rotate(-90deg);text-align:center;line-height:8px">7</span><div class="a" style="left:137.5px;top:213.5px;width:1px;height:1px;background:#6a6a6a"></div><div class="a" style="left:136.3px;top:220.2px;width:3.4px;height:1px;background:#6a6a6a"></div><div class="a" style="left:137.5px;top:227.0px;width:1px;height:1px;background:#6a6a6a"></div><span class="t ui" style="left:134px;top:230.0px;width:8px;height:8px;font-size:8px;color:#4a4a4a;transform:rotate(-90deg);text-align:center;line-height:8px">6</span><div class="a" style="left:137.5px;top:240.5px;width:1px;height:1px;background:#6a6a6a"></div><div class="a" style="left:136.3px;top:247.3px;width:3.4px;height:1px;background:#6a6a6a"></div><div class="a" style="left:137.5px;top:254.0px;width:1px;height:1px;background:#6a6a6a"></div><span class="t ui" style="left:134px;top:257.0px;width:8px;height:8px;font-size:8px;color:#4a4a4a;transform:rotate(-90deg);text-align:center;line-height:8px">5</span><div class="a" style="left:137.5px;top:267.6px;width:1px;height:1px;background:#6a6a6a"></div><div class="a" style="left:136.3px;top:274.3px;width:3.4px;height:1px;background:#6a6a6a"></div><div class="a" style="left:137.5px;top:281.1px;width:1px;height:1px;background:#6a6a6a"></div><span class="t ui" style="left:134px;top:284.0px;width:8px;height:8px;font-size:8px;color:#4a4a4a;transform:rotate(-90deg);text-align:center;line-height:8px">4</span><div class="a" style="left:137.5px;top:294.6px;width:1px;height:1px;background:#6a6a6a"></div><div class="a" style="left:136.3px;top:301.4px;width:3.4px;height:1px;background:#6a6a6a"></div><div class="a" style="left:137.5px;top:308.1px;width:1px;height:1px;background:#6a6a6a"></div><span class="t ui" style="left:134px;top:311.1px;width:8px;height:8px;font-size:8px;color:#4a4a4a;transform:rotate(-90deg);text-align:center;line-height:8px">3</span><div class="a" style="left:137.5px;top:321.6px;width:1px;height:1px;background:#6a6a6a"></div><div class="a" style="left:136.3px;top:328.4px;width:3.4px;height:1px;background:#6a6a6a"></div><div class="a" style="left:137.5px;top:335.2px;width:1px;height:1px;background:#6a6a6a"></div><span class="t ui" style="left:134px;top:338.1px;width:8px;height:8px;font-size:8px;color:#4a4a4a;transform:rotate(-90deg);text-align:center;line-height:8px">2</span><div class="a" style="left:137.5px;top:348.7px;width:1px;height:1px;background:#6a6a6a"></div><div class="a" style="left:136.3px;top:355.4px;width:3.4px;height:1px;background:#6a6a6a"></div><div class="a" style="left:137.5px;top:362.2px;width:1px;height:1px;background:#6a6a6a"></div><span class="t ui" style="left:134px;top:365.2px;width:8px;height:8px;font-size:8px;color:#4a4a4a;transform:rotate(-90deg);text-align:center;line-height:8px">1</span><div class="a" style="left:137.5px;top:375.7px;width:1px;height:1px;background:#6a6a6a"></div><div class="a" style="left:136.3px;top:382.5px;width:3.4px;height:1px;background:#6a6a6a"></div><div class="a" style="left:137.5px;top:389.2px;width:1px;height:1px;background:#6a6a6a"></div><span class="t ui" style="left:134px;top:392.2px;width:8px;height:8px;font-size:8px;color:#4a4a4a;transform:rotate(-90deg);text-align:center;line-height:8px">0</span><div class="a" style="left:137.5px;top:402.8px;width:1px;height:1px;background:#6a6a6a"></div><div class="a" style="left:136.3px;top:409.5px;width:3.4px;height:1px;background:#6a6a6a"></div><div class="a" style="left:137.5px;top:416.3px;width:1px;height:1px;background:#6a6a6a"></div><span class="t ui" style="left:134px;top:419.2px;width:8px;height:8px;font-size:8px;color:#4a4a4a;transform:rotate(-90deg);text-align:center;line-height:8px">1</span><div class="a" style="left:137.5px;top:429.8px;width:1px;height:1px;background:#6a6a6a"></div><div class="a" style="left:136.3px;top:436.6px;width:3.4px;height:1px;background:#6a6a6a"></div><div class="a" style="left:137.5px;top:443.3px;width:1px;height:1px;background:#6a6a6a"></div><span class="t ui" style="left:134px;top:446.3px;width:8px;height:8px;font-size:8px;color:#4a4a4a;transform:rotate(-90deg);text-align:center;line-height:8px">2</span><div class="a" style="left:137.5px;top:456.8px;width:1px;height:1px;background:#6a6a6a"></div><div class="a" style="left:136.3px;top:463.6px;width:3.4px;height:1px;background:#6a6a6a"></div><div class="a" style="left:137.5px;top:470.4px;width:1px;height:1px;background:#6a6a6a"></div><span class="t ui" style="left:134px;top:473.3px;width:8px;height:8px;font-size:8px;color:#4a4a4a;transform:rotate(-90deg);text-align:center;line-height:8px">3</span><div class="a" style="left:137.5px;top:483.9px;width:1px;height:1px;background:#6a6a6a"></div><div class="a" style="left:136.3px;top:490.6px;width:3.4px;height:1px;background:#6a6a6a"></div><div class="a" style="left:137.5px;top:497.4px;width:1px;height:1px;background:#6a6a6a"></div><span class="t ui" style="left:134px;top:500.4px;width:8px;height:8px;font-size:8px;color:#4a4a4a;transform:rotate(-90deg);text-align:center;line-height:8px">4</span><div class="a" style="left:137.5px;top:510.9px;width:1px;height:1px;background:#6a6a6a"></div><div class="a" style="left:136.3px;top:517.7px;width:3.4px;height:1px;background:#6a6a6a"></div><div class="a" style="left:137.5px;top:524.4px;width:1px;height:1px;background:#6a6a6a"></div><span class="t ui" style="left:134px;top:527.4px;width:8px;height:8px;font-size:8px;color:#4a4a4a;transform:rotate(-90deg);text-align:center;line-height:8px">5</span><div class="a" style="left:137.5px;top:538.0px;width:1px;height:1px;background:#6a6a6a"></div><div class="a" style="left:136.3px;top:544.7px;width:3.4px;height:1px;background:#6a6a6a"></div><div class="a" style="left:137.5px;top:551.5px;width:1px;height:1px;background:#6a6a6a"></div><span class="t ui" style="left:134px;top:554.4px;width:8px;height:8px;font-size:8px;color:#4a4a4a;transform:rotate(-90deg);text-align:center;line-height:8px">6</span><div class="a" style="left:137.5px;top:565.0px;width:1px;height:1px;background:#6a6a6a"></div><div class="a" style="left:136.3px;top:571.8px;width:3.4px;height:1px;background:#6a6a6a"></div><div class="a" style="left:137.5px;top:578.5px;width:1px;height:1px;background:#6a6a6a"></div><span class="t ui" style="left:134px;top:581.5px;width:8px;height:8px;font-size:8px;color:#4a4a4a;transform:rotate(-90deg);text-align:center;line-height:8px">7</span><div class="a" style="left:137.5px;top:592.0px;width:1px;height:1px;background:#6a6a6a"></div><div class="a" style="left:136.3px;top:598.8px;width:3.4px;height:1px;background:#6a6a6a"></div><div class="a" style="left:137.5px;top:605.6px;width:1px;height:1px;background:#6a6a6a"></div><span class="t ui" style="left:134px;top:608.5px;width:8px;height:8px;font-size:8px;color:#4a4a4a;transform:rotate(-90deg);text-align:center;line-height:8px">8</span><div class="a" style="left:137.5px;top:619.1px;width:1px;height:1px;background:#6a6a6a"></div><div class="a" style="left:136.3px;top:625.8px;width:3.4px;height:1px;background:#6a6a6a"></div><div class="a" style="left:137.5px;top:632.6px;width:1px;height:1px;background:#6a6a6a"></div><span class="t ui" style="left:134px;top:635.6px;width:8px;height:8px;font-size:8px;color:#4a4a4a;transform:rotate(-90deg);text-align:center;line-height:8px">9</span><div class="a" style="left:137.5px;top:146.4px;width:1px;height:1px;background:#777"></div>
<span class="t ui" style="left:8.0px;top:116.0px;font-size:10px;color:#c0502d;">1</span>
<span class="t ui" style="left:8.0px;top:181.7px;font-size:10px;color:#555;">2</span>
<div class="a" style="left:21px;top:116px;width:95.5px;height:56px;background:#fff;border:2.200px solid #b94b2b"></div>
<div class="a" style="left:23.3px;top:183.2px;width:90.5px;height:52px;background:#fff;border:1px solid #dcdcdc"></div>
<svg style="left:22.600px;top:117.600px" width="92.300" height="52.800" viewBox="163.500 138.700 916 516">
<path d="M163 197h917" stroke="#aaa" stroke-width="5"/><rect x="205" y="163" width="348" height="16" fill="#666" opacity=".8"/>
<path d="M440 205h53v-13l26 27-26 27v-13h-53z" fill="#4db6a0"/><circle cx="597" cy="213" r="21" fill="#57b8a8"/><rect x="786" y="157" width="39" height="19" fill="#4fb6a8"/><rect x="987" y="175" width="84" height="9" fill="#e9a09a"/>
<rect x="214" y="222" width="76" height="14" fill="#888"/><rect x="232" y="248" width="212" height="8" fill="#aaa"/><rect x="232" y="267" width="208" height="8" fill="#aaa"/><rect x="232" y="285" width="250" height="8" fill="#c99"/>
<rect x="214" y="327" width="76" height="14" fill="#888"/><rect x="230" y="356" width="98" height="12" fill="#aaa"/><circle cx="529" cy="322" r="26" fill="#e0b23c"/>
<rect x="242" y="378" width="305" height="30" fill="#222"/><rect x="242" y="410" width="305" height="14" fill="#ddd"/><rect x="247" y="432" width="105" height="9" fill="#aaa"/><rect x="256" y="452" width="152" height="8" fill="#bbb"/><rect x="256" y="466" width="200" height="8" fill="#bbb"/><rect x="256" y="480" width="181" height="8" fill="#bbb"/>
<rect x="231" y="503" width="98" height="12" fill="#aaa"/><path d="M270 601L306 540l38 24 37 14 38-15 38 38z" fill="#bbb"/><rect x="252" y="600" width="225" height="4" fill="#aaa"/><rect x="254" y="608" width="217" height="8" fill="#ccc"/><rect x="484" y="528" width="25" height="78" fill="#ddd"/>
<path d="M582 240v380" stroke="#ccc" stroke-width="4"/>
<rect x="618" y="221" width="75" height="14" fill="#888"/><rect x="635" y="249" width="98" height="12" fill="#e08a84"/><rect x="826" y="249" width="111" height="12" fill="#aaa"/>
<circle cx="671" cy="297" r="16" fill="#bcd"/><rect x="700" y="288" width="86" height="9" fill="#aaa"/><circle cx="671" cy="345" r="16" fill="#555"/><rect x="700" y="336" width="63" height="9" fill="#aaa"/><circle cx="671" cy="392" r="17" fill="#333"/><rect x="698" y="384" width="85" height="9" fill="#aaa"/>
<rect x="855" y="274" width="85" height="53" fill="#9cc7d6"/><rect x="895" y="331" width="41" height="51" fill="#c9a58c"/><rect x="855" y="386" width="85" height="52" fill="#7a4a3a"/>
<rect x="950" y="281" width="102" height="8" fill="#aaa"/><rect x="950" y="294" width="36" height="8" fill="#aaa"/><rect x="950" y="307" width="79" height="8" fill="#666"/>
<rect x="950" y="336" width="107" height="8" fill="#aaa"/><rect x="950" y="349" width="64" height="8" fill="#aaa"/><rect x="950" y="362" width="95" height="8" fill="#666"/>
<rect x="950" y="393" width="102" height="8" fill="#aaa"/><rect x="950" y="406" width="46" height="8" fill="#aaa"/><rect x="950" y="419" width="102" height="8" fill="#666"/>
<rect x="618" y="440" width="75" height="14" fill="#888"/>
<rect x="635" y="473" width="297" height="12" fill="#aaa"/><rect x="647" y="501" width="150" height="9" fill="#bbb"/><rect x="635" y="525" width="430" height="12" fill="#aaa"/><rect x="647" y="552" width="235" height="9" fill="#bbb"/><rect x="635" y="575" width="366" height="12" fill="#aaa"/><rect x="647" y="603" width="337" height="9" fill="#bbb"/>
<rect x="1051" y="632" width="18" height="10" fill="#dbb"/>
</svg>
<div class="a" style="left:32px;top:190.5px;width:26px;height:1.6px;background:repeating-linear-gradient(90deg,#222 0 1.6px,transparent 1.6px 4.1px)"></div>
<div class="a" style="left:32px;top:198.5px;width:8px;height:1px;background:repeating-linear-gradient(90deg,#444 0 1px,transparent 1px 2px)"></div><div class="a" style="left:41px;top:197.8px;width:13px;height:2.4px;background:#333"></div>
<div class="a" style="left:1095.500px;top:106px;width:10.500px;height:528px;background:#dcdcdc"></div><div class="a" style="left:1095.500px;top:115px;width:9.500px;height:254.500px;background:#fff;border:1px solid #c8c8c8"></div><div class="a" style="left:1105.500px;top:104px;width:1px;height:601px;background:#d2d2d2"></div>
<div class="a" style="left:1095.5px;top:106px;width:10px;height:9.5px;background:#f0f0f0;border:1px solid #d5d5d5"></div>
<div class="a" style="left:1095.5px;top:624px;width:10px;height:9.5px;background:#fff;border:1px solid #d5d5d5"></div>
<svg style="left:1097.500px;top:109px" width="6" height="4" viewBox="0 0 6 4"><path d="M0 3.500l3-3 3 3z" fill="#666"/></svg>
<svg style="left:1097.500px;top:627px" width="6" height="4" viewBox="0 0 6 4"><path d="M0 0.500l3 3 3-3z" fill="#666"/></svg>
<svg style="left:1097.500px;top:636px" width="6" height="7" viewBox="0 0 6 7" fill="#666"><path d="M0 3l3-3 3 3z"/><path d="M0 6.500l3-3 3 3z"/></svg>
<svg style="left:1097.500px;top:647.500px" width="6" height="7" viewBox="0 0 6 7" fill="#666"><path d="M0 0l3 3 3-3z"/><path d="M0 3.500l3 3 3-3z"/></svg>
<div class="a" style="left:1107.300px;top:104px;width:172.700px;height:600px;background:#e7e7e7"></div>
<span class="t ui" style="left:1115.8px;top:115.5px;font-size:15px;color:#b5492b;letter-spacing:0.19px;">차트 영역 서식</span>
<svg style="left:1233px;top:119px" width="6" height="4" viewBox="0 0 6 4"><path d="M0 0h6L3 3.500z" fill="#555"/></svg>
<svg style="left:1260px;top:117.500px" width="7" height="7" viewBox="0 0 7 7" stroke="#444" stroke-width="1.200"><path d="M0.500 0.500l6 6M6.500 0.500l-6 6"/></svg>
<span class="t ui" style="left:1118.1px;top:140.4px;font-size:8.5px;color:#222;font-weight:700;letter-spacing:0.42px;">차트 옵션</span>
<svg style="left:1158px;top:142.500px" width="6" height="4" viewBox="0 0 6 4"><path d="M0 0h6L3 3.500z" fill="#555"/></svg>
<span class="t ui" style="left:1175.6px;top:140.4px;font-size:8.5px;color:#444;font-weight:500;letter-spacing:0.28px;">텍스트 옵션</span>
<svg style="left:1118px;top:158px" width="18" height="18" viewBox="0 0 18 18" fill="none" stroke="#444" stroke-width="1"><path d="M2 9l6-6 6 6-6 6z" fill="#fff"/><path d="M6 1.500v4M14 9q2.500 2.500 1.500 5"/></svg>
<svg style="left:1145px;top:158px" width="16" height="18" viewBox="0 0 16 18" fill="#fff" stroke="#444" stroke-width="1"><path d="M8 1.500l6.500 5-2.500 7.500H4l-2.500-7.500z"/><path d="M4.500 16.500h7" stroke="#ccc" stroke-width="2"/></svg>
<div class="a" style="left:1170px;top:157px;width:20px;height:20px;background:#ababab"></div><div class="a" style="left:1176.500px;top:161.500px;width:11px;height:11.500px;background:#d4502a"></div>
<svg style="left:1172px;top:159px" width="16" height="16" viewBox="0 0 16 16" fill="none" stroke="#d4502a" stroke-width="1"><path d="M2.500 2.500v11M1 2.500h3M1 13.500h3M4.500 1h11M4.500 0v2M15.500 0v2"/><path d="M10 5.500v5M7.500 8h5" stroke="#fff"/></svg>
<div class="a" style="left:1114px;top:185.500px;width:158px;height:1px;background:#d0d0d0"></div>
<svg style="left:1176px;top:182px" width="8" height="5" viewBox="0 0 8 5"><path d="M0 4.500L4 0.500l4 4" fill="#e7e7e7" stroke="#d0d0d0"/></svg>
<svg style="left:1121.500px;top:193.5px" width="4" height="6" viewBox="0 0 4 6"><path d="M0.500 0.500l3 2.500-3 2.500z" fill="none" stroke="#888" stroke-width="0.800"/></svg>
<span class="t ui" style="left:1130.0px;top:192.5px;font-size:8.5px;color:#333;font-weight:700;letter-spacing:0.41px;">크기</span>
<svg style="left:1121.500px;top:211px" width="4" height="6" viewBox="0 0 4 6"><path d="M0.500 0.500l3 2.500-3 2.500z" fill="none" stroke="#888" stroke-width="0.800"/></svg>
<span class="t ui" style="left:1130.0px;top:210.0px;font-size:8.5px;color:#333;font-weight:700;letter-spacing:0.41px;">위치</span>
<svg style="left:1121.500px;top:228.25px" width="4" height="6" viewBox="0 0 4 6"><path d="M0.500 0.500l3 2.500-3 2.500z" fill="none" stroke="#888" stroke-width="0.800"/></svg>
<span class="t ui" style="left:1130.0px;top:227.3px;font-size:8.5px;color:#333;font-weight:700;letter-spacing:0.14px;">대체 텍스트</span>
<div class="a" style="left:133px;top:670px;width:972.500px;height:2px;background:#dddddd"></div>
<span class="t ui" style="left:137.0px;top:677.4px;font-size:10px;color:#666;font-weight:400;letter-spacing:0.64px;">여기에 슬라이드 노트의 내용을 입력하십시오</span>
<div class="a" style="left:0;top:705px;width:1280px;height:15px;background:#f3f3f3"></div>
<span class="t ui" style="left:5.6px;top:708.4px;font-size:8.5px;color:#444;letter-spacing:0.34px;">슬라이드 1/2</span>
<svg style="left:65px;top:708px" width="11" height="9" viewBox="0 0 11 9" fill="none" stroke="#666" stroke-width="0.900"><rect x="0.500" y="0.500" width="6" height="8"/><path d="M7 5l1.500 2 2.500-4"/></svg>
<span class="t ui" style="left:86.6px;top:708.4px;font-size:8.5px;color:#444;letter-spacing:0.18px;">영어(미국)</span>
<svg style="left:955px;top:708px" width="9" height="9" viewBox="0 0 9 9" stroke="#555" fill="none"><path d="M0 8.500h9M0 6h9M0 3.500h9M2.500 2.500L4.500 0.500l2 2"/></svg>
<span class="t ui" style="left:965.6px;top:708.4px;font-size:8.5px;color:#444;letter-spacing:-0.79px;">메모</span>
<svg style="left:995px;top:707.500px" width="10" height="10" viewBox="0 0 10 10"><path d="M0 0h10v6.500H5l-3 3v-3H0z" fill="#555"/></svg>
<span class="t ui" style="left:1006.2px;top:708.4px;font-size:8.5px;color:#444;letter-spacing:-0.39px;">메모</span>
<div class="a" style="left:1035px;top:705px;width:26px;height:15px;background:#c8c8c8"></div>
<svg style="left:1043px;top:707.500px" width="10" height="9" viewBox="0 0 10 9" fill="none" stroke="#555" stroke-width="0.900"><rect x="0.500" y="0.500" width="9" height="8"/><rect x="3" y="2.500" width="5" height="4"/><path d="M1.500 2.500v4"/></svg>
<svg style="left:1070px;top:707.500px" width="10" height="9" viewBox="0 0 10 9" fill="none" stroke="#777" stroke-width="0.900"><rect x="0.500" y="0.500" width="3.500" height="3"/><rect x="6" y="0.500" width="3.500" height="3"/><rect x="0.500" y="5.500" width="3.500" height="3"/><rect x="6" y="5.500" width="3.500" height="3"/></svg>
<svg style="left:1096px;top:707.500px" width="10" height="9" viewBox="0 0 10 9" fill="#bbb" stroke="#777" stroke-width="0.900"><path d="M0.500 1q2.500-1 4.500 0 2-1 4.500 0v7q-2.500-1-4.500 0-2-1-4.500 0zM5 1v7"/></svg>
<svg style="left:1122px;top:707.500px" width="10" height="10" viewBox="0 0 10 10" fill="none" stroke="#666" stroke-width="0.900"><path d="M0 0.500h10M1 0.500v5h8v-5M5 5.500v3M3 9h4"/></svg>
<div class="a" style="left:1145px;top:712px;width:5px;height:1px;background:#555"></div><div class="a" style="left:1154.700px;top:712px;width:66px;height:1px;background:#999"></div><div class="a" style="left:1187px;top:708px;width:2.500px;height:9px;background:#555"></div>
<div class="a" style="left:1223.500px;top:712px;width:5px;height:1px;background:#555"></div><div class="a" style="left:1225.500px;top:710px;width:1px;height:5px;background:#555"></div>
<span class="t ui" style="left:1238.1px;top:708.1px;font-size:8.5px;color:#444;letter-spacing:-0.33px;">108%</span>
<svg style="left:1267.500px;top:708px" width="9" height="9" viewBox="0 0 9 9" fill="none" stroke="#555" stroke-width="0.900"><rect x="0.500" y="0.500" width="8" height="8"/><path d="M2.500 4V2.500H4M5 2.500h1.500V4M6.500 5v1.500H5M4 6.500H2.500V5"/></svg>
<div class="a" style="left:163.500px;top:138.700px;width:915.600px;height:515.500px;background:#fff"></div>
<span class="t sl" style="left:204.2px;top:159.9px;font-size:26px;color:#111;font-weight:500;letter-spacing:-0.80px;">공여사들 유튜브 채널 현황 보고서</span>
<div class="a" style="left:163.500px;top:196.500px;width:916px;height:1.200px;background:#9c9c9c"></div>
<span class="t sl" style="left:986.4px;top:174.2px;font-size:12.5px;color:#d8352b;letter-spacing:0.32px;">2021.01.11(월)</span>
<div class="a" style="left:786px;top:157.500px;width:38.500px;height:19px;background:#8bc34a;border:1px solid #6fb7c4"></div>
<svg style="left:0;top:0" width="1280" height="720" viewBox="0 0 1280 720"><g fill="#8bc34a" stroke="#6fb7c4" stroke-width="1">
<path d="M439.500 205H492.500V191.500L510.500 209.500A18 18 0 0 0 510.500 228L492.500 245.500V232H439.500z"/>
<path d="M530.500 213.500L539.900 223 529 233.800A22 22 0 0 1 530.500 213.500z"/>
<path d="M579.300 201.900A20.500 22.200 0 1 1 578.200 222.100L588.100 212.300z"/>
</g></svg>
<div class="a" style="left:581.500px;top:240px;width:1px;height:380px;background:#e6e6e6"></div>
<div class="a" style="left:629.700px;top:195px;width:13.700px;height:4px;background:#fff"></div><div class="a" style="left:670.300px;top:195px;width:3.500px;height:4px;background:#fff"></div>
<div class="a" style="left:214.5px;top:225px;width:5px;height:5px;background:#111"></div>
<span class="t sl" style="left:224.7px;top:220.1px;font-size:17px;color:#111;font-weight:500;letter-spacing:-0.40px;">채널 정보</span>
<span class="t sl" style="left:230.4px;top:248.0px;font-size:11.5px;color:#333;letter-spacing:0.92px;">1)</span>
<span class="t sl" style="left:255.4px;top:248.4px;font-size:11.5px;color:#333;letter-spacing:-0.10px;">채널명 : 공여사들 (개설일 : 2019.11.10)</span>
<span class="t sl" style="left:230.4px;top:266.2px;font-size:11.5px;color:#333;letter-spacing:0.92px;">4)</span>
<span class="t sl" style="left:255.4px;top:266.7px;font-size:11.5px;color:#333;letter-spacing:-0.48px;">카테고리 : ① 노하우/스타일, ② 과학기술</span>
<span class="t sl" style="left:230.4px;top:284.2px;font-size:11.5px;color:#333;letter-spacing:0.92px;">5)</span>
<span class="t sl" style="left:255.4px;top:284.7px;font-size:11.5px;color:#333;letter-spacing:-0.53px;">주요콘텐츠 : <span style="color:#d8352b">직장인 엑셀</span>, 직장생활 팁, 공학적 로또</span>
<div class="a" style="left:214.3px;top:330px;width:5px;height:5px;background:#111"></div>
<span class="t sl" style="left:225.2px;top:326.1px;font-size:17px;color:#111;font-weight:500;letter-spacing:-0.65px;">채널 통계</span>
<div class="a" style="left:228.3px;top:360.3px;width:4.4px;height:4.4px;border-radius:50%;background:#222"></div>
<span class="t sl" style="left:240.3px;top:355.3px;font-size:14.5px;color:#222;letter-spacing:-0.09px;">주요 실적 현황</span>
<div class="a" style="left:242.500px;top:377.700px;width:304.300px;height:30.500px;background:#262626"></div>
<div class="a" style="left:242.500px;top:408.200px;width:304.300px;height:17px;background:#fff;border-bottom:1px solid #d9d9d9"></div>
<div class="a" style="left:317.7px;top:377.700px;width:1px;height:30.500px;background:#f0f0f0"></div><div class="a" style="left:317.7px;top:408.200px;width:1px;height:17px;background:#e3e3e3"></div>
<div class="a" style="left:394.0px;top:377.700px;width:1px;height:30.500px;background:#f0f0f0"></div><div class="a" style="left:394.0px;top:408.200px;width:1px;height:17px;background:#e3e3e3"></div>
<div class="a" style="left:469.7px;top:377.700px;width:1px;height:30.500px;background:#f0f0f0"></div><div class="a" style="left:469.7px;top:408.200px;width:1px;height:17px;background:#e3e3e3"></div>
<span class="t sl" style="left:259.5px;top:387.6px;font-size:10.5px;color:#fff;font-weight:500;letter-spacing:0.80px;">구독자수</span>
<span class="t sl" style="left:340.5px;top:381.4px;font-size:10.5px;color:#fff;font-weight:500;letter-spacing:1.03px;">조회수</span>
<span class="t sl" style="left:349.9px;top:393.9px;font-size:12px;color:#fff;letter-spacing:0.00px;">ⓐ</span>
<span class="t sl" style="left:417.0px;top:381.4px;font-size:10.5px;color:#fff;font-weight:500;letter-spacing:1.03px;">영상수</span>
<span class="t sl" style="left:426.4px;top:393.9px;font-size:12px;color:#fff;letter-spacing:0.00px;">ⓑ</span>
<span class="t sl" style="left:481.5px;top:381.4px;font-size:10.5px;color:#fff;font-weight:500;letter-spacing:0.47px;">평균 조회수</span>
<span class="t sl" style="left:494.4px;top:393.9px;font-size:12px;color:#fff;letter-spacing:0.18px;">ⓐ/ⓑ</span>
<span class="t sl" style="left:262.4px;top:411.2px;font-size:11px;color:#333;letter-spacing:0.14px;">14만 명</span>
<span class="t sl" style="left:334.9px;top:411.2px;font-size:11px;color:#333;letter-spacing:0.69px;">375만 회<span style="color:#d8352b">*</span></span>
<span class="t sl" style="left:417.9px;top:411.2px;font-size:11px;color:#333;letter-spacing:0.54px;">103개</span>
<span class="t sl" style="left:489.4px;top:411.2px;font-size:11px;color:#333;letter-spacing:0.10px;">3.6만 회</span>
<span class="t sl" style="left:247.0px;top:432.8px;font-size:6px;color:#d8352b;letter-spacing:0.00px;">★</span>
<span class="t sl" style="left:255.3px;top:432.2px;font-size:10px;color:#222;font-weight:700;letter-spacing:0.05px;">조회수 기준 Top3 영상</span>
<span class="t sl" style="left:422.9px;top:428.9px;font-size:8px;color:#9a9a9a;letter-spacing:0.49px;">(기간 : 2019.11.10~2021.01.11)</span>
<span class="t sl" style="left:255.9px;top:451.4px;font-size:10px;color:#333;letter-spacing:-0.06px;">- 직장인 엑셀, 이것만 알면 됨<span style="color:#d8352b">(240만)</span></span>
<span class="t sl" style="left:255.9px;top:465.7px;font-size:10px;color:#333;letter-spacing:-0.10px;">- 직장인 엑셀, 쓸만한 단축키만 정복해보자<span style="color:#d8352b">(22만)</span></span>
<span class="t sl" style="left:255.9px;top:479.1px;font-size:10px;color:#333;letter-spacing:-0.11px;">- 직장인 문서관리 끝판왕, 폴더정리 팁<span style="color:#d8352b">(16만)</span></span>
<svg style="left:480px;top:280px" width="100" height="80" viewBox="0 0 900 720">
<circle cx="435" cy="382" r="228" fill="#fcc94d" stroke="#111" stroke-width="32"/>
<path d="M305 355q38-62 76 0M488 355q38-62 76 0" fill="none" stroke="#111" stroke-width="28" stroke-linecap="round"/>
<path d="M325 440q110 95 222 0" fill="none" stroke="#111" stroke-width="28" stroke-linecap="round"/>
<path d="M598 262q-75-35-60-78 22-38 62 0 40-38 62 0 15 43-64 78z" fill="#ea4e3c" stroke="#111" stroke-width="30" stroke-linejoin="round"/>
<path d="M272 596q-72-38-58-80 22-36 60 0 40-36 60 0 14 42-62 80z" fill="#ea4e3c" stroke="#111" stroke-width="30" stroke-linejoin="round"/>
</svg>
<div class="a" style="left:228.8px;top:506.8px;width:4.4px;height:4.4px;border-radius:50%;background:#222"></div>
<span class="t sl" style="left:242.2px;top:502.5px;font-size:15px;color:#222;letter-spacing:-0.56px;">채널 성장 추이</span>
<div class="a" style="left:240px;top:499.500px;width:275px;height:128.700px;border:1px solid #b5b5b5"></div>
<svg style="left:0;top:0" width="1280" height="720" viewBox="0 0 1280 720">
<g stroke="#dcdcdc" stroke-width="0.800" stroke-dasharray="2 1.500"><path d="M251 533.750H475M251 557H475M251 579.500H475"/></g>
<path d="M270 601.750L306.250 540 343.750 563.750 381.250 578.250 418.750 563 457.500 601.750z" fill="#bfbfbf"/>
<path d="M251 601.750H475" stroke="#d0d0d0" stroke-width="1"/>
<g fill="#595959"><rect x="298" y="598.750" width="16.500" height="3"/><rect x="335.500" y="597" width="16.500" height="4.750"/><rect x="373" y="596.500" width="16.500" height="5.250"/><rect x="410.500" y="595.750" width="16.500" height="6"/><rect x="448" y="595.250" width="16.500" height="6.500"/></g>
<rect x="415" y="524.500" width="3.800" height="3.800" fill="#bfbfbf"/><rect x="415" y="538" width="3.800" height="3.800" fill="#595959"/>
<g fill="#fff" stroke="#8a8a8a" stroke-width="1"><circle cx="240.500" cy="500" r="2.800"/><circle cx="377.500" cy="500" r="2.800"/><circle cx="515" cy="500" r="2.800"/><circle cx="240.500" cy="564" r="2.800"/><circle cx="515" cy="564" r="2.800"/><circle cx="240.500" cy="628" r="2.800"/><circle cx="377.500" cy="628" r="2.800"/><circle cx="515" cy="628" r="2.800"/></g>
</svg>
<span class="t sl" style="left:292.8px;top:526.6px;font-size:10px;color:#c9211e;font-weight:700;letter-spacing:0.62px;">138만</span>
<span class="t sl" style="left:421.6px;top:522.1px;font-size:9px;color:#6a6a6a;letter-spacing:0.25px;">월별 조회수</span>
<span class="t sl" style="left:421.6px;top:535.8px;font-size:9px;color:#6a6a6a;letter-spacing:0.29px;">누적 구독자수</span>
<span class="t sl" style="left:483.2px;top:528.4px;font-size:10.5px;color:#6a6a6a;letter-spacing:-0.38px;">150만</span>
<span class="t sl" style="left:483.2px;top:551.4px;font-size:10.5px;color:#6a6a6a;letter-spacing:-0.38px;">100만</span>
<span class="t sl" style="left:487.5px;top:574.4px;font-size:10.5px;color:#6a6a6a;letter-spacing:0.23px;">50만</span>
<span class="t sl" style="left:489.0px;top:596.9px;font-size:10.5px;color:#6a6a6a;letter-spacing:0.55px;">0만</span>
<span class="t sl" style="left:255.8px;top:586.8px;font-size:8.5px;color:#6a6a6a;letter-spacing:0.37px;">0.01만</span>
<span class="t sl" style="left:295.6px;top:583.5px;font-size:8.5px;color:#6a6a6a;letter-spacing:0.40px;">7.2만</span>
<span class="t sl" style="left:333.1px;top:583.0px;font-size:8.5px;color:#6a6a6a;letter-spacing:0.40px;">9.9만</span>
<span class="t sl" style="left:368.6px;top:582.0px;font-size:8.5px;color:#6a6a6a;letter-spacing:0.28px;">11.0만</span>
<span class="t sl" style="left:406.1px;top:581.0px;font-size:8.5px;color:#6a6a6a;letter-spacing:0.12px;">13.7만</span>
<span class="t sl" style="left:443.6px;top:579.8px;font-size:8.5px;color:#6a6a6a;letter-spacing:0.12px;">14.0만</span>
<span class="t sl" style="left:253.8px;top:608.1px;font-size:9.5px;color:#6a6a6a;letter-spacing:0.55px;">'19.4Q</span>
<span class="t sl" style="left:291.3px;top:608.1px;font-size:9.5px;color:#6a6a6a;letter-spacing:0.55px;">'20.1Q</span>
<span class="t sl" style="left:328.8px;top:608.1px;font-size:9.5px;color:#6a6a6a;letter-spacing:0.55px;">'20.2Q</span>
<span class="t sl" style="left:366.3px;top:608.1px;font-size:9.5px;color:#6a6a6a;letter-spacing:0.55px;">'20.3Q</span>
<span class="t sl" style="left:403.8px;top:608.1px;font-size:9.5px;color:#6a6a6a;letter-spacing:0.55px;">'20.4Q</span>
<span class="t sl" style="left:441.8px;top:608.1px;font-size:9.5px;color:#6a6a6a;letter-spacing:0.28px;">'21.1월</span>
<div class="a" style="left:618px;top:225px;width:5px;height:5px;background:#111"></div>
<span class="t sl" style="left:629.6px;top:220.1px;font-size:17px;color:#111;font-weight:500;letter-spacing:-1.02px;">시장 현황</span>
<div class="a" style="left:632.8px;top:253.3px;width:4.4px;height:4.4px;border-radius:50%;background:#d8352b"></div>
<span class="t sl" style="left:646.2px;top:248.0px;font-size:15px;color:#d8352b;letter-spacing:-0.59px;">유사 채널 현황</span>
<div class="a" style="left:824.3px;top:253.3px;width:4.4px;height:4.4px;border-radius:50%;background:#222"></div>
<span class="t sl" style="left:836.8px;top:248.0px;font-size:15px;color:#222;letter-spacing:-0.53px;">유사 콘텐츠 현황</span>
<div class="a" style="left:648.700px;top:276px;width:155.800px;height:40px;background:#f7f7f7"></div><div class="a" style="left:648.700px;top:324.500px;width:131.300px;height:39.300px;background:#f7f7f7"></div><div class="a" style="left:648.700px;top:372.500px;width:155.800px;height:39.500px;background:#f7f7f7"></div>
<svg style="left:653px;top:279px" width="36" height="36" viewBox="0 0 36 36"><circle cx="18" cy="18" r="17.500" fill="#fff"/><g fill="#cfe0fb" stroke="#4f7fe0" stroke-width="1.100"><circle cx="11" cy="12.500" r="4.600"/><circle cx="24.500" cy="12.500" r="4.600"/></g><path d="M15.500 12h4.500M17.500 9v9.500q0 2 2 2h2" fill="none" stroke="#4f7fe0" stroke-width="1.100"/></svg>
<span class="t sl" style="left:659.2px;top:304.5px;font-size:6.5px;color:#111;font-weight:700;letter-spacing:0.02px;transform:scaleY(1.25);">J.KOBA</span>
<svg style="left:653px;top:327px" width="36" height="36" viewBox="0 0 36 36"><circle cx="18" cy="18" r="17.500" fill="#fff"/><path d="M7 17q-2-13 11-13 13 0 11 13l-2 3H9z" fill="#161616"/><path d="M10.500 14q7.500-5 15 0v6q-1 6-7.500 6t-7.500-6z" fill="#fbe3d0"/><path d="M5 31q2-7 9-7.500l4 2.500 4-2.500q7 .5 9 7.500-6 4.500-13 4.500T5 31z" fill="#161616"/><path d="M5.500 19l3-4 2.500 2.500-3 4.500z" fill="#fbe3d0" stroke="#222" stroke-width="0.600"/><circle cx="14.500" cy="18.500" r=".9" fill="#222"/><circle cx="21.500" cy="18.500" r=".9" fill="#222"/></svg>
<div class="a" style="left:653.700px;top:375.500px;width:34px;height:34px;border-radius:50%;background:#1d1b1c"></div>
<span class="t sl" style="left:660.2px;top:381.2px;font-size:6px;color:#fff;font-weight:700;letter-spacing:0.21px;font-style:italic;font-family:'Liberation Serif',serif;">the</span>
<span class="t sl" style="left:658.0px;top:386.2px;font-size:16px;color:#fff;font-weight:700;letter-spacing:0.45px;font-style:italic;font-family:'Liberation Serif',serif;">edit</span>
<span class="t sl" style="left:699.5px;top:287.2px;font-size:10.5px;color:#2f2f2f;letter-spacing:-0.03px;">JohnKOBA Design</span>
<span class="t sl" style="left:699.5px;top:335.4px;font-size:11px;color:#2f2f2f;letter-spacing:0.67px;">코딩하는거니</span>
<span class="t sl" style="left:697.5px;top:383.1px;font-size:10.5px;color:#2f2f2f;letter-spacing:-0.28px;">디에디트 THE EDIT</span>
<svg style="left:789.8px;top:289.3px" width="6.400" height="6.400" viewBox="0 0 10 10"><circle cx="5" cy="5" r="5" fill="#5f5f5f"/><path d="M2.500 5.200l1.800 1.800 3.200-3.600" stroke="#fff" stroke-width="1.400" fill="none"/></svg>
<svg style="left:767.8px;top:337.8px" width="6.400" height="6.400" viewBox="0 0 10 10"><circle cx="5" cy="5" r="5" fill="#5f5f5f"/><path d="M2.500 5.200l1.800 1.800 3.200-3.600" stroke="#fff" stroke-width="1.400" fill="none"/></svg>
<svg style="left:787.3px;top:385.3px" width="6.400" height="6.400" viewBox="0 0 10 10"><circle cx="5" cy="5" r="5" fill="#5f5f5f"/><path d="M2.500 5.200l1.800 1.800 3.200-3.600" stroke="#fff" stroke-width="1.400" fill="none"/></svg>
<span class="t sl" style="left:699.7px;top:301.2px;font-size:6px;color:#7d7d7d;letter-spacing:0.41px;">구독자 20.7만명</span>
<span class="t sl" style="left:699.7px;top:349.2px;font-size:6px;color:#7d7d7d;letter-spacing:0.41px;">구독자 14.3만명</span>
<span class="t sl" style="left:697.7px;top:395.2px;font-size:6px;color:#7d7d7d;letter-spacing:0.18px;">구독자 27.4만명</span>
<div class="a" style="left:855px;top:274.800px;width:84.300px;height:52px;background:#fbfbfa;border:2px solid #4a9bb3;box-shadow:inset 0 0 0 1px #cfe8f1"></div>
<svg style="left:857px;top:276.800px" width="80.300" height="48" viewBox="0 0 80.800 48"><defs><clipPath id="c1"><rect width="80.800" height="48"/></clipPath></defs><g clip-path="url(#c1)"><rect x="0" y="0" width="38" height="48" fill="#fbf8f3"/><path d="M58 0h22.800v30H62z" fill="#eceeec"/><path d="M70 6l-16 5" stroke="#9a8f86" stroke-width="1.500"/><path d="M34 48q0-12 6-16l8-4h9l8 4q6 4 5 16z" fill="#f4f3f1"/><path d="M62 31l9-16 4 1.500-5 20zM41 32l-7-7 3-3 8 7z" fill="#ecdcd0"/><path d="M52 34v12" stroke="#c9c9c9" stroke-width="1"/><ellipse cx="51" cy="15.500" rx="7" ry="9" fill="#e8c4ae"/><path d="M44 13q0-8.500 7-9 7 .5 7 9-1.500-5.500-7-5.500t-7 5.500z" fill="#4a3a34"/></g></svg>
<span class="t ui" style="left:857.3px;top:293.6px;font-size:14.5px;color:#4a9fc6;font-weight:900;letter-spacing:1.06px;-webkit-text-stroke:1.600px #eaf6fb;paint-order:stroke fill;transform:scaleY(1.550);text-shadow:0 0 2px #7fc4e4,0 0 3px #9fd4ee;">엑셀왕</span>
<svg style="left:895px;top:330.500px" width="39.800" height="51.300" viewBox="0 0 40.500 50.800"><defs><clipPath id="c2"><path d="M13.500 0H40.500V50.800H0V42z"/></clipPath></defs><g clip-path="url(#c2)"><rect width="40.500" height="50.800" fill="#d6c8b4"/><path d="M0 0h14v50.800H0z" fill="#b9a58a"/><path d="M0 10h40.500M0 23h40.500M0 36h16" stroke="#efe9df" stroke-width="1.800"/><path d="M16 2v7M19 3v6M30 12v10M33 12v10M36 13v9M5 26v9M8 26v9M11 27v8M3 40v9M6 40v9" stroke="#8a7560" stroke-width="1.500"/><path d="M32 0h8.500v10H32z" fill="#ece6dc"/><path d="M9 50.800q0-16 6-19l7-3h6l7 3q5.500 3 5.500 19z" fill="#f1efec"/><path d="M22 28h6l-3 5z" fill="#dcae8e"/><ellipse cx="25" cy="17" rx="6" ry="8" fill="#dfb394"/><path d="M18.500 15q-.5-9 6.500-9t6.500 9q-2-5-6.500-5t-6.500 5z" fill="#1f1815"/><path d="M19 47l4-5 2 1-2 5zM31 47l-4-5-2 1 2 5z" fill="#e2b79a"/><circle cx="27" cy="37" r=".8" fill="#333"/></g></svg>
<div class="a" style="left:854.700px;top:386.300px;width:84px;height:51.700px;background:#2a1712;overflow:hidden"><div class="a" style="left:0;top:0;width:40.300px;height:42.200px;background:#eeeef0"></div><div class="a" style="left:0;top:42.200px;width:40.300px;height:9.500px;background:#4a2216"></div><div class="a" style="left:40.500px;top:0;width:23.500px;height:32px;background:linear-gradient(#2c2129,#8a4a2c 55%,#e09a48 92%)"></div><div class="a" style="left:40.500px;top:32px;width:23.500px;height:20.700px;background:#4a2014"></div><div class="a" style="left:64.200px;top:0;width:19.800px;height:44.700px;background:#15141c"></div><div class="a" style="left:12px;top:11px;width:27px;height:14px;background:#d2d2d9;box-shadow:0 0 2px #aaa"></div><div class="a" style="left:3px;top:4px;width:10px;height:1px;background:#e0a0a0"></div><div class="a" style="left:2px;top:30px;width:24px;height:1px;background:#cfcfd4"></div><div class="a" style="left:2px;top:34px;width:18px;height:1px;background:#cfcfd4"></div><div class="a" style="left:44px;top:36px;width:17px;height:16.700px;border-radius:7px 7px 0 0;background:#19171a"></div><div class="a" style="left:48.500px;top:33.500px;width:7.500px;height:9px;border-radius:50%;background:#d6a485"></div><div class="a" style="left:48.500px;top:33px;width:7.500px;height:4px;border-radius:4px 4px 0 0;background:#1a1412"></div><div class="a" style="left:78px;top:3px;width:4.500px;height:4.500px;border-radius:50%;background:#f0f0f0"></div><div class="a" style="left:66px;top:10px;width:9px;height:28px;background:repeating-linear-gradient(#8a8a92 0 1px,transparent 1px 3.500px)"></div><div class="a" style="left:61px;top:44.700px;width:23px;height:7px;background:#d6261e"></div></div>
<span class="t ui" style="left:924.3px;top:433.1px;font-size:4.5px;color:#fff;font-weight:700;letter-spacing:0.26px;">실시간</span>
<div class="a" style="left:918.500px;top:434px;width:4px;height:2.400px;border:0.700px solid #fff;border-radius:1px"></div>
<span class="t sl" style="left:949.2px;top:280.1px;font-size:10.5px;color:#222;letter-spacing:-0.33px;">퇴근이 10분 빨라지는 엑</span>
<span class="t sl" style="left:949.2px;top:293.4px;font-size:10.5px;color:#222;letter-spacing:-1.05px;">셀 단축키</span>
<span class="t sl" style="left:949.2px;top:306.5px;font-size:10.5px;color:#111;font-weight:700;letter-spacing:-0.25px;">(회사원B, 92만 회)</span>
<span class="t sl" style="left:949.2px;top:335.7px;font-size:10.5px;color:#222;letter-spacing:-0.54px;">건배사 공식과 즉석에서 건</span>
<span class="t sl" style="left:949.2px;top:348.8px;font-size:10.5px;color:#222;letter-spacing:-1.01px;">배구호 만드는 법</span>
<span class="t sl" style="left:949.2px;top:361.9px;font-size:10.5px;color:#111;font-weight:700;letter-spacing:-0.11px;">(커넥팅닷TV, 31만 회)</span>
<span class="t sl" style="left:949.2px;top:392.5px;font-size:10.5px;color:#222;letter-spacing:-0.39px;">매주 일요일 밤 실시간 스</span>
<span class="t sl" style="left:949.2px;top:405.4px;font-size:10.5px;color:#222;letter-spacing:-0.69px;">트리밍 방송</span>
<span class="t sl" style="left:949.2px;top:418.8px;font-size:10.5px;color:#111;font-weight:700;letter-spacing:-0.26px;">(슈카월드, 평균 20만 회)</span>
<div class="a" style="left:618px;top:444.5px;width:5px;height:5px;background:#111"></div>
<span class="t sl" style="left:629.4px;top:439.1px;font-size:17px;color:#111;font-weight:500;letter-spacing:-0.75px;">향후 전망</span>
<div class="a" style="left:633.9px;top:477.1px;width:4.4px;height:4.4px;border-radius:50%;background:#222"></div>
<span class="t sl" style="left:646.8px;top:472.6px;font-size:14.5px;color:#222;letter-spacing:-0.20px;">시청자 참여형 콘텐츠 확대를 통한 마니아층 확보</span>
<span class="t sl" style="left:646.9px;top:500.1px;font-size:12px;color:#444;letter-spacing:0.41px;">- 오디오 스트리밍 '직딩톡' 등</span>
<div class="a" style="left:633.9px;top:529.4px;width:4.4px;height:4.4px;border-radius:50%;background:#222"></div>
<span class="t sl" style="left:646.8px;top:524.9px;font-size:14.5px;color:#222;letter-spacing:-0.73px;">탑 티어<span style="font-size:13px">(Top-tier)</span>급 콘텐츠 제작을 통한 신규 시청자층 유입 유도하고 싶어요.</span>
<span class="t sl" style="left:646.9px;top:551.6px;font-size:12px;color:#444;letter-spacing:0.32px;">- 직장인들이 의외로 헤매는 PPT 기능 모음 등</span>
<div class="a" style="left:633.9px;top:579.5px;width:4.4px;height:4.4px;border-radius:50%;background:#222"></div>
<span class="t sl" style="left:646.8px;top:575.0px;font-size:14.5px;color:#222;letter-spacing:-0.22px;">크리에이터 스튜디오의 통계 데이터를 활용한 콘텐츠 질 향상</span>
<span class="t sl" style="left:646.9px;top:601.7px;font-size:12px;color:#444;letter-spacing:0.28px;">- 남녀 성비, 연령대, 시청시간대, 검색 유입 키워드, 외부 유입 경로</span>
<span class="t sl" style="left:1050.4px;top:631.8px;font-size:12.5px;color:#444;letter-spacing:0.93px;">1/1</span>
<div class="a" style="left:551px;top:607px;width:57px;height:57px;border-radius:50%;background:radial-gradient(circle,#f9bdd0 0,#f9bfd2 88%,rgba(251,215,226,0) 100%)"></div>
<svg style="left:0;top:0" width="0" height="0"><defs><filter id="capf" x="-2%" y="-20%" width="104%" height="140%" color-interpolation-filters="sRGB">
<feGaussianBlur in="SourceAlpha" stdDeviation="0.900" result="b1"/>
<feComponentTransfer in="b1" result="rb"><feFuncA type="linear" slope="8" intercept="-3"/></feComponentTransfer>
<feMorphology in="rb" operator="dilate" radius="2.600" result="d1"/>
<feGaussianBlur in="d1" stdDeviation="1.400" result="b2"/>
<feComponentTransfer in="b2" result="ol"><feFuncA type="linear" slope="9" intercept="-3.600"/></feComponentTransfer>
<feFlood flood-color="#fff"/><feComposite in2="ol" operator="in" result="white"/>
<feFlood flood-color="#0a0a0a"/><feComposite in2="rb" operator="in" result="black"/>
<feMerge><feMergeNode in="white"/><feMergeNode in="black"/></feMerge></filter></defs></svg>
<div class="a" style="left:340px;top:600px;width:600px;height:90px;filter:url(#capf)">
<span class="t ui cap" style="left:17.1px;top:28.1px;font-size:34px;color:#0a0a0a;font-weight:700;letter-spacing:0.00px;transform:scaleY(1.180);">이</span>
<span class="t ui cap" style="left:59.3px;top:28.1px;font-size:34px;color:#0a0a0a;font-weight:700;letter-spacing:0.48px;transform:scaleY(1.180);">차트를</span>
<span class="t ui cap" style="left:167.1px;top:28.1px;font-size:34px;color:#0a0a0a;font-weight:700;letter-spacing:-1.12px;transform:scaleY(1.180);">누르고</span>
<span class="t ui cap" style="left:269.3px;top:28.1px;font-size:34px;color:#0a0a0a;font-weight:700;letter-spacing:1.93px;transform:scaleY(1.180);">방향키로</span>
<span class="t ui cap" style="left:410.9px;top:28.1px;font-size:34px;color:#0a0a0a;font-weight:700;letter-spacing:0.06px;transform:scaleY(1.180);">움직였을</span>
<span class="t ui cap" style="left:549.3px;top:28.1px;font-size:34px;color:#0a0a0a;font-weight:700;letter-spacing:0.00px;transform:scaleY(1.180);">때</span>
</div>
</div>
</body>
</html>
